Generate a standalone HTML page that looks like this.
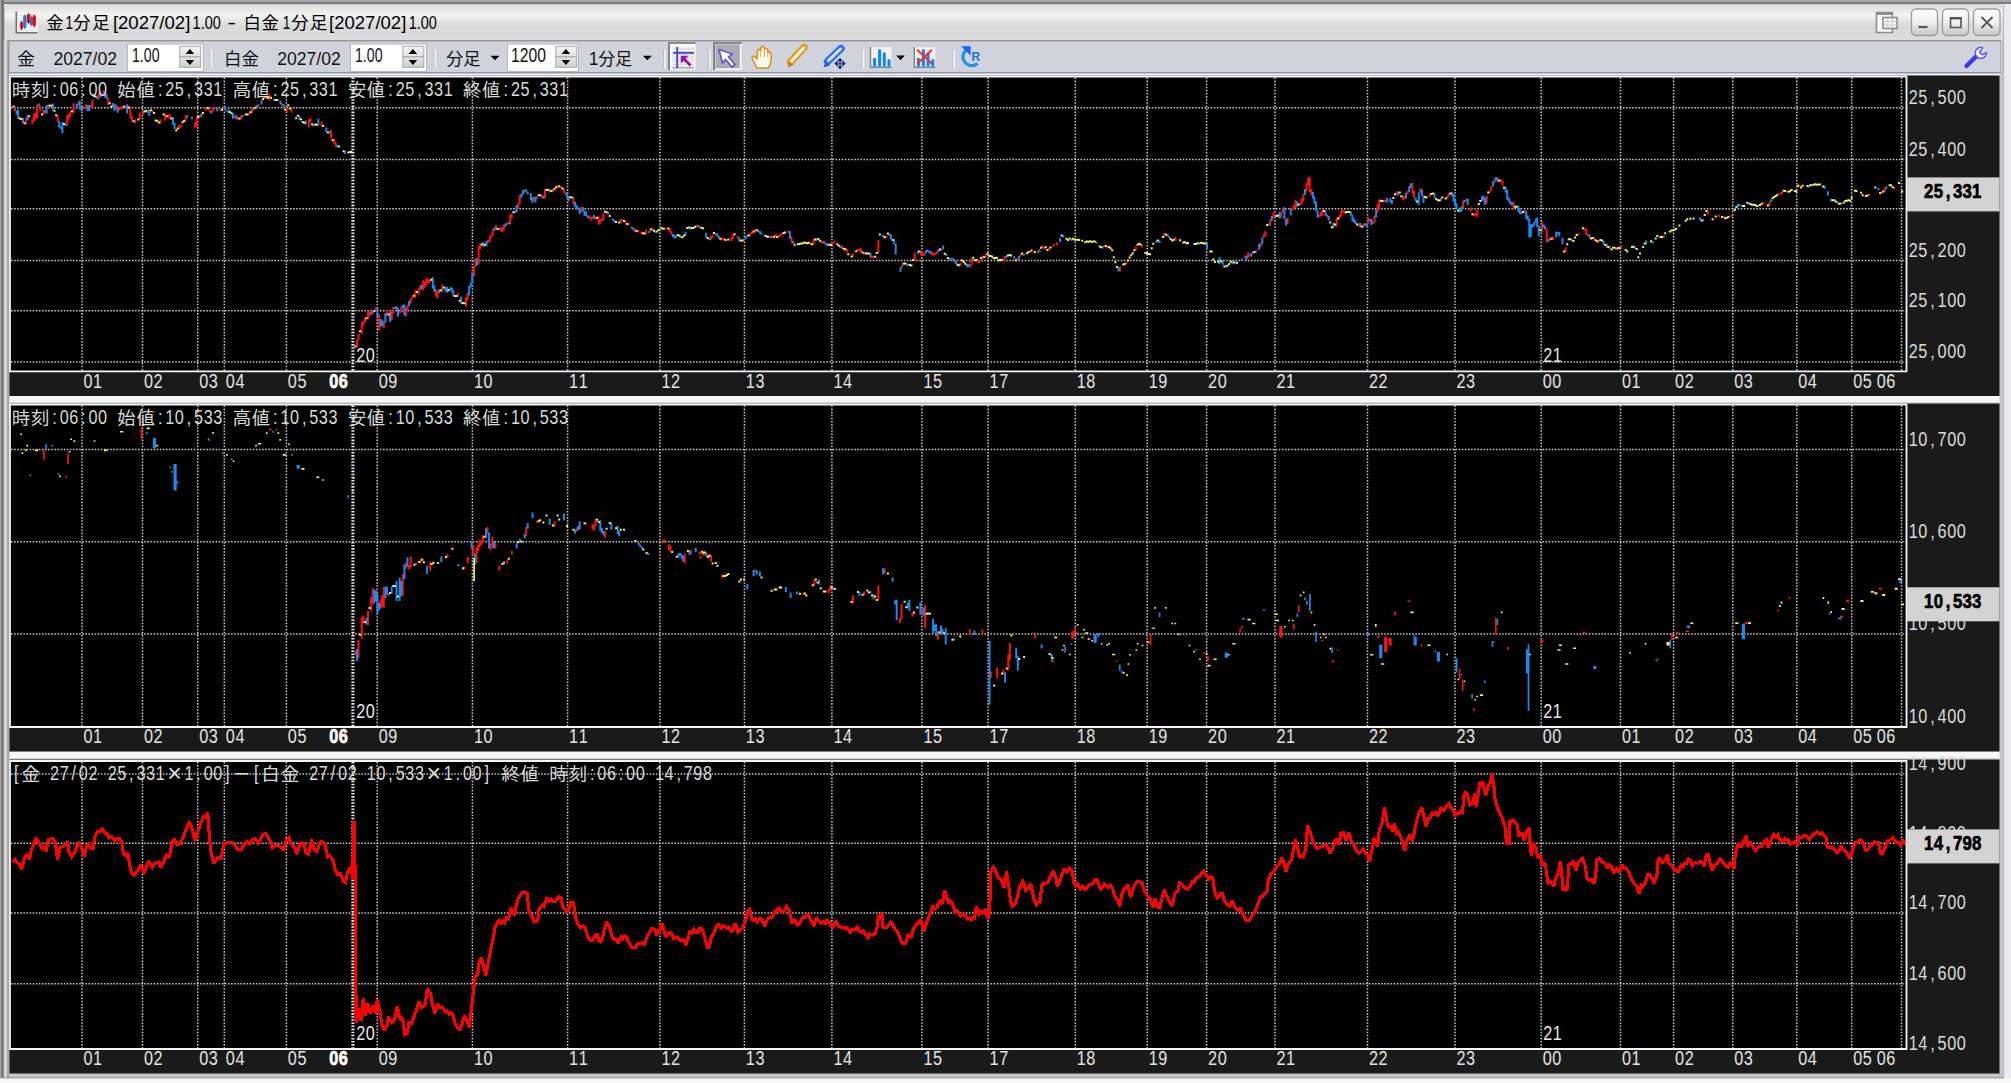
<!DOCTYPE html>
<html lang="ja">
<head>
<meta charset="utf-8">
<title>金1分足[2027/02]1.00 - 白金1分足[2027/02]1.00</title>
<style>
html,body{margin:0;padding:0;background:#f0f0f0;overflow:hidden}
svg{display:block}
text{white-space:pre}
</style>
</head>
<body>
<svg width="2011" height="1083" viewBox="0 0 2011 1083">
<defs>
<linearGradient id="gt" x1="0" y1="0" x2="0" y2="1">
<stop offset="0" stop-color="#dcdcdc"/><stop offset="0.28" stop-color="#f3f3f3"/><stop offset="0.6" stop-color="#d9d9d9"/><stop offset="1" stop-color="#dddddd"/>
</linearGradient>
<linearGradient id="gb" x1="0" y1="0" x2="0" y2="1">
<stop offset="0" stop-color="#ffffff"/><stop offset="0.5" stop-color="#f0f0f0"/><stop offset="1" stop-color="#c4c4c4"/>
</linearGradient>
<linearGradient id="gtop" x1="0" y1="0" x2="0" y2="1">
<stop offset="0" stop-color="#a6a8b0"/><stop offset="0.45" stop-color="#a0a2a8"/><stop offset="0.6" stop-color="#808080"/><stop offset="1" stop-color="#7c7c7c"/>
</linearGradient>
<linearGradient id="gsp" x1="0" y1="0" x2="0" y2="1">
<stop offset="0" stop-color="#f4f4f4"/><stop offset="1" stop-color="#d0d0d0"/>
</linearGradient>
</defs>
<!-- desktop / outer frame -->
<rect x="0" y="0" width="2011" height="1083" fill="#f4f4f8"/>
<rect x="0" y="0" width="2011" height="4" fill="url(#gtop)"/>
<rect x="0" y="0" width="4" height="1083" fill="#747474"/>
<rect x="0" y="0" width="1.2" height="1083" fill="#a8a8a8"/>
<!-- window body -->
<path d="M4 1078V9Q4 4 9 4H1998Q2004 4 2004 10V1078Z" fill="#c6c6c6"/>
<path d="M4.8 40.5V9.5Q4.8 4.8 9.5 4.8H1998Q2003.2 4.8 2003.2 10V40.5Z" fill="url(#gt)"/>
<rect x="3.7" y="40" width="3.4" height="1038" fill="#d4d4d4"/><rect x="7.1" y="40" width="2.4" height="1038" fill="#a6a6a6"/>
<rect x="2003.3" y="4" width="1" height="1074" fill="#b0b0b0"/>
<rect x="2004.3" y="4" width="6.7" height="1079" fill="#eaeaf2"/>
<rect x="0" y="1078" width="2011" height="5" fill="#f6f6f6"/>
<rect x="0" y="1077.2" width="2004" height="1.2" fill="#9a9a9a"/>
<!-- toolbar -->
<rect x="8" y="40" width="1993" height="34" fill="#989898"/>
<rect x="9.5" y="41.5" width="1991" height="31" fill="#d0d3db"/>
<rect x="9.5" y="72" width="1991" height="1.6" fill="#8a98b4"/>
<rect x="9.5" y="73.6" width="1991" height="2" fill="#f8f8f8"/>
<!-- gaps between panels -->
<rect x="9.5" y="396" width="1990" height="7.5" fill="#f7f7f7"/>
<rect x="9.5" y="751.5" width="1990" height="8" fill="#f7f7f7"/>
<rect x="9.5" y="402.2" width="1990" height="1.3" fill="#cfcfcf"/>
<rect x="9.5" y="758.2" width="1990" height="1.3" fill="#cfcfcf"/>
<!-- title icon -->
<g>
<rect x="16.5" y="12" width="21" height="21" fill="#f4f6f6"/>
<path d="M18 15.5H37M18 18.5H37M18 21.5H37M18 24.5H37M18 27.5H37M18 30.5H37" stroke="#dcdcdc" stroke-width="0.8"/>
<path d="M16.3 11.5V32.8H37.5" stroke="#707070" stroke-width="1.6" fill="none"/>
<path d="M21.6 20.5L23.1 23V28.1L21.6 30.6L20.1 28.1V23Z" fill="#ff0000"/><path d="M24.8 14.2L26.4 16.7V26.7L24.8 29.2L23.2 26.7V16.7Z" fill="#0a80e8"/><path d="M28.6 12.8L30.4 15.3V21.7L28.6 24.2L26.8 21.7V15.3Z" fill="#ff0000"/><path d="M31.4 15.8L32.9 18.3V23.9L31.4 26.4L29.9 23.9V18.3Z" fill="#0a80e8"/><path d="M34.2 14.2L35.9 16.7V25.1L34.2 27.6L32.5 25.1V16.7Z" fill="#ff0000"/>
</g>
<!-- title text -->
<text y="28.8" font-family="'Liberation Sans','Noto Sans CJK JP',sans-serif" font-size="18.4" fill="#000"><tspan x="46.3" textLength="17.2" lengthAdjust="spacing" font-size="17.4">金</tspan><tspan x="65.6" textLength="7.6" lengthAdjust="spacingAndGlyphs">1</tspan><tspan x="73.2" textLength="36.4" lengthAdjust="spacing" font-size="17.4">分足</tspan><tspan x="112.9" textLength="77.4" lengthAdjust="spacingAndGlyphs">[2027/02]</tspan><tspan x="192.6" textLength="28.2" lengthAdjust="spacingAndGlyphs">1.00</tspan> <tspan x="227.4" textLength="8.4" lengthAdjust="spacingAndGlyphs">-</tspan> <tspan x="243.4" textLength="35.6" lengthAdjust="spacing" font-size="17.4">白金</tspan><tspan x="282.7" textLength="7.6" lengthAdjust="spacingAndGlyphs">1</tspan><tspan x="291.3" textLength="36.2" lengthAdjust="spacing" font-size="17.4">分足</tspan><tspan x="329.1" textLength="77.2" lengthAdjust="spacingAndGlyphs">[2027/02]</tspan><tspan x="408.7" textLength="28.2" lengthAdjust="spacingAndGlyphs">1.00</tspan></text>
<!-- title buttons -->
<g>
<rect x="1876.5" y="12.5" width="16" height="20" fill="#fafafa" stroke="#8c8c8c" stroke-width="1.5"/>
<rect x="1876.5" y="12.5" width="16" height="2.4" fill="#8c8c8c"/>
<rect x="1883" y="17.5" width="14" height="11" fill="#f4f4f4" stroke="#8c8c8c" stroke-width="1.6"/>
<path d="M1883 21.5H1897M1883 25H1897M1887.7 19V28M1892.3 19V28" stroke="#c4c4c4" stroke-width="0.8"/>
<rect x="1911.5" y="9" width="26" height="26.5" rx="4.5" fill="url(#gb)" stroke="#9a9a9a" stroke-width="1.3"/>
<rect x="1942.5" y="9" width="26" height="26.5" rx="4.5" fill="url(#gb)" stroke="#9a9a9a" stroke-width="1.3"/>
<rect x="1973.5" y="9" width="26.5" height="26.5" rx="4.5" fill="url(#gb)" stroke="#9a9a9a" stroke-width="1.3"/>
<path d="M1918.5 27H1927.5" stroke="#555" stroke-width="2.2"/>
<rect x="1950.5" y="18" width="10.5" height="9.5" fill="none" stroke="#555" stroke-width="1.6"/>
<rect x="1950" y="17" width="11.5" height="2.4" fill="#555"/>
<path d="M1981.5 17L1992.5 28M1992.5 17L1981.5 28" stroke="#555" stroke-width="1.8"/>
</g>
<g font-family="'Liberation Sans','Noto Sans CJK JP',sans-serif" font-size="17.6" fill="#141414">
<!-- labels -->
<text x="17" y="65" textLength="18" lengthAdjust="spacingAndGlyphs">金</text>
<text x="53.5" y="65.3" font-size="18.4" textLength="63.5" lengthAdjust="spacingAndGlyphs">2027/02</text>
<text x="224" y="65" textLength="35" lengthAdjust="spacingAndGlyphs">白金</text>
<text x="277.2" y="65.3" font-size="18.4" textLength="63.5" lengthAdjust="spacingAndGlyphs">2027/02</text>
<text x="446" y="65" textLength="34.5" lengthAdjust="spacingAndGlyphs">分足</text>
<text x="589" y="65" textLength="43" lengthAdjust="spacingAndGlyphs">1分足</text>
<path d="M490.5 55.8H499.5L495 60.3Z M642.8 55.8H651.8L647.3 60.3Z M896.2 55.6H904.8L900.5 60.2Z" fill="#000"/>
<!-- spin boxes -->
<g>
<rect x="127.5" y="44" width="76" height="27.5" fill="#fff" stroke="#b4b8c2" stroke-width="1"/>
<rect x="350.5" y="44" width="76" height="27.5" fill="#fff" stroke="#b4b8c2" stroke-width="1"/>
<rect x="507.5" y="44" width="71" height="27.5" fill="#fff" stroke="#b4b8c2" stroke-width="1"/>
<text x="132" y="61.8" font-size="19.6" textLength="27.5" lengthAdjust="spacingAndGlyphs">1.00</text>
<text x="355" y="61.8" font-size="19.6" textLength="27.5" lengthAdjust="spacingAndGlyphs">1.00</text>
<text x="511" y="61.8" font-size="19.6" textLength="35" lengthAdjust="spacingAndGlyphs">1200</text>
</g>
<g id="spin">
<rect x="179.8" y="46.3" width="21" height="21" fill="url(#gsp)" stroke="#a8a8a8" stroke-width="1"/>
<path d="M179.8 56.8H200.8" stroke="#a8a8a8" stroke-width="1.2"/>
<path d="M185.6 54H194.2L189.9 49Z M185.6 60H194.2L189.9 65Z" fill="#000"/>
</g>
<use href="#spin" x="223"/>
<use href="#spin" x="376"/>
<!-- separators -->
<g id="sep"><rect x="209.6" y="49.6" width="1" height="19.2" fill="#b8bcc4"/><rect x="210.6" y="49.6" width="1.6" height="19.2" fill="#f4f4f6"/></g>
<use href="#sep" x="224"/>
<use href="#sep" x="453.5"/>
<use href="#sep" x="498.4"/>
<use href="#sep" x="652"/>
<use href="#sep" x="742.6"/>
<!-- icon 1: crosshair page (pressed) -->
<g>
<rect x="669" y="43" width="26.5" height="27" fill="#fafafa"/>
<path d="M669 70V43H695.5" stroke="#6e6e6e" stroke-width="1.6" fill="none"/>
<rect x="672.5" y="46.5" width="21.5" height="21.5" fill="#f2f2ec"/>
<path d="M672.5 49H694M672.5 51.5H694M672.5 54.5H694M672.5 57H694M672.5 59.5H694M672.5 62H694M672.5 64.5H694M672.5 67H694" stroke="#cfcfcf" stroke-width="0.8"/>
<path d="M672.5 68H694" stroke="#888" stroke-width="1"/>
<path d="M677.2 47V68M673 52.9H694" stroke="#4a42c4" stroke-width="1.8"/>
<path d="M690.5 65.5L683 58" stroke="#9a10b4" stroke-width="2.6"/>
<path d="M680.8 55.8H688.5L680.8 63.5Z" fill="#9a10b4"/>
</g>
<!-- icon 2: pointer (pressed) -->
<g>
<rect x="714.2" y="43" width="27.3" height="27" fill="#fafafa"/>
<path d="M714.2 70V43H741.5" stroke="#6e6e6e" stroke-width="1.6" fill="none"/>
<rect x="715.5" y="44.3" width="24.3" height="24" fill="#a9adb1"/>
<path d="M719 49.5L732.5 54L728.5 57L735 64.5L732 67L725.5 59.5L722.5 63Z" fill="#fff" stroke="#6a52d4" stroke-width="1.7" stroke-linejoin="round"/>
</g>
<!-- hand -->
<g>
<path d="M757 68C755 63 752 60 752 57.5C752.5 55.5 755 56 757 59L757.5 51C757.8 48.8 760.3 48.8 760.5 51L761 48C761.4 45.8 764 45.8 764.2 48L764.6 49.5C765 47.6 767.6 47.8 767.7 50L768.2 53C768.8 51.4 771 51.8 771 54C771.6 59 771 63.5 768.5 68Z" fill="#fffaf0" stroke="#e0901a" stroke-width="1.6" stroke-linejoin="round"/>
<path d="M760.7 51V57M764.4 49.5V57M767.8 52V57.5" stroke="#e8a848" stroke-width="1"/>
</g>
<!-- pencil -->
<g>
<path d="M790.5 62L804 47.5" stroke="#e89a20" stroke-width="7.4" stroke-linecap="round"/>
<path d="M791.2 61.4L803.6 48" stroke="#fff6e4" stroke-width="3" stroke-linecap="round"/>
<path d="M787.8 67.2L789 61L793.5 65Z" fill="#c07818"/>
</g>
<!-- marker -->
<g>
<path d="M827.5 61.5L841 48.5" stroke="#2f74e4" stroke-width="7.4" stroke-linecap="round"/>
<path d="M828.5 60.5L840.5 49" stroke="#dce8ff" stroke-width="2.8" stroke-linecap="round"/>
<path d="M823.5 67.5L825.5 61.5L830 65.5Z" fill="#2a60c8"/>
<path d="M840 58L845.6 63.6L840 69.2L834.4 63.6Z" fill="#0e2468"/>
<path d="M838.5 60.5V66.8M841.6 60.5V66.8M836.8 62.2H843.2M836.8 65.2H843.2" stroke="#c8d4f4" stroke-width="0.7"/>
</g>
<!-- bar chart -->
<g id="bars">
<rect x="870.5" y="47.3" width="21" height="20" fill="#f8f8f8"/>
<path d="M871 50H891.5M871 53H891.5M871 56H891.5M871 59H891.5M871 62H891.5M871 65H891.5" stroke="#e2dcd4" stroke-width="0.8"/>
<path d="M870.5 47V67.3H891.6" stroke="#808080" stroke-width="1.4" fill="none"/>
<path d="M874.6 58V66.6M879.6 49.5V66.6M884.3 52.4V66.6M889 59.2V66.6" stroke="#0a84ff" stroke-width="3"/>
</g>
<use href="#bars" x="43.8"/>
<path d="M917.8 50.2L931.4 63.2M931.4 50.2L917.8 63.2" stroke="#ff2a2a" stroke-width="2" stroke-linecap="round"/>
<!-- refresh -->
<g>
<path d="M966 50A8.6 8.6 0 1 0 977.5 63.5" stroke="#2294e4" stroke-width="3.2" fill="none"/>
<path d="M961 46.2H970.6V55.5Z" fill="#1464ff"/>
<text x="971.6" y="61.4" font-size="12.6" font-weight="bold" fill="#1274d8" textLength="8.6" lengthAdjust="spacingAndGlyphs">R</text>
</g>
<!-- wrench -->
<g>
<path d="M1966.5 66L1977 55.5" stroke="#3a3af0" stroke-width="4.4" stroke-linecap="round"/>
<path d="M1982.6 47.6A5.6 5.6 0 1 0 1986.4 52.6L1982.2 54.8L1979.6 52.4Z" fill="#f0f0ff" stroke="#5a5af0" stroke-width="1.5" stroke-linejoin="round"/>
</g>
</g>

<g font-family="'Liberation Sans','IPAGothic',sans-serif"><rect x="9.5" y="75.5" width="1990.0" height="320.5" fill="#1a1a1a"/>
<rect x="10.0" y="76.5" width="1896.5" height="294.9" fill="#000"/>
<g stroke="#c8c8c8" stroke-width="1.5" stroke-dasharray="1.55 1.55" fill="none"><path d="M82.0 77.5V371.4"/><path d="M142.5 77.5V371.4"/><path d="M197.7 77.5V371.4"/><path d="M224.3 77.5V371.4"/><path d="M286.4 77.5V371.4"/><path d="M352.9 77.5V371.4" stroke="#ececec" stroke-width="3.1"/><path d="M377.2 77.5V371.4"/><path d="M472.4 77.5V371.4"/><path d="M567.6 77.5V371.4"/><path d="M659.9 77.5V371.4"/><path d="M744.4 77.5V371.4"/><path d="M831.9 77.5V371.4"/><path d="M921.9 77.5V371.4"/><path d="M988.1 77.5V371.4"/><path d="M1075.3 77.5V371.4"/><path d="M1147.2 77.5V371.4"/><path d="M1206.6 77.5V371.4"/><path d="M1275.0 77.5V371.4"/><path d="M1367.5 77.5V371.4"/><path d="M1455.0 77.5V371.4"/><path d="M1541.2 77.5V371.4"/><path d="M1620.5 77.5V371.4"/><path d="M1673.6 77.5V371.4"/><path d="M1732.8 77.5V371.4"/><path d="M1796.8 77.5V371.4"/><path d="M1851.7 77.5V371.4"/><path d="M1901.5 77.5V371.4"/><path d="M11.0 107.7H1905.5"/><path d="M11.0 159.5H1905.5"/><path d="M11.0 208.7H1905.5"/><path d="M11.0 260.5H1905.5"/><path d="M11.0 310.7H1905.5"/><path d="M11.0 362.0H1905.5"/></g>
<path d="M15.0 105.9V111.1M26.1 117.5V124.5M32.4 119.4V124.3M34.0 113.6V121.6M35.5 112.9V119.5M37.1 104.8V118.3M40.3 105.7V110.9M43.4 109.8V114.9M48.2 104.6V109.0M57.7 115.1V121.7M67.1 115.6V125.8M68.7 114.0V119.6M70.3 111.3V117.3M73.5 103.3V113.1M78.2 102.0V105.8M84.5 106.8V109.2M86.1 104.2V109.3M90.8 104.4V107.6M92.4 99.5V108.1M98.7 93.0V99.5M103.5 90.6V94.0M108.2 97.8V105.0M116.1 104.2V109.8M119.3 108.1V110.5M120.9 106.6V109.5M122.4 106.3V108.7M125.6 105.4V107.8M130.3 106.6V117.9M131.9 116.3V121.0M135.1 119.4V123.0M139.8 112.7V119.5M143.0 110.6V114.5M152.5 110.0V112.8M160.4 119.4V124.0M165.1 113.4V120.7M168.3 114.2V118.2M169.8 113.9V119.2M179.3 124.7V129.3M180.9 124.6V127.0M185.6 114.9V121.5M195.1 122.3V127.4M196.7 116.4V127.2M199.9 115.0V117.6M206.2 107.5V110.7M209.3 107.3V111.4M212.5 108.0V112.6M214.1 106.8V109.8M220.4 108.5V110.9M226.7 109.7V112.1M234.6 115.6V118.0M237.8 116.5V119.8M240.9 115.6V119.5M248.8 112.8V115.2M252.0 107.6V113.0M258.3 104.0V106.8M264.6 96.1V99.3M269.4 93.5V100.5M282.0 102.9V105.7M286.8 108.5V112.4M291.5 107.8V112.6M308.9 119.5V126.9M310.5 118.3V121.9M321.5 121.8V125.9M331.0 129.9V137.9M334.2 138.3V144.0M335.7 142.3V147.1M357.0 339.5V347.3M358.5 333.8V340.5M361.7 322.2V333.9M363.3 321.0V325.6M364.9 318.0V323.1M368.0 310.5V319.3M369.6 311.0V316.5M372.8 311.3V314.5M375.9 307.4V311.6M379.1 313.9V330.7M383.8 320.5V328.1M387.0 310.4V316.0M391.7 310.8V320.3M393.3 306.8V313.7M399.6 311.1V313.5M401.2 306.5V312.4M405.9 307.5V316.5M407.5 304.9V311.6M410.7 298.6V303.8M412.3 296.7V299.6M415.4 290.2V297.9M418.6 288.2V294.6M420.2 285.5V290.2M423.3 280.2V290.6M424.9 281.5V287.8M426.5 278.2V285.5M428.1 278.4V282.8M429.6 279.9V282.9M436.0 289.2V296.4M437.5 291.0V298.5M442.3 284.5V292.5M458.1 293.1V296.7M466.0 297.5V306.5M467.6 292.6V300.5M473.9 266.1V276.5M475.5 258.2V267.1M478.6 246.1V264.6M480.2 243.2V249.1M488.1 239.8V243.1M489.7 236.5V242.1M491.3 234.2V237.9M492.8 228.9V235.5M496.0 225.1V229.7M500.7 227.9V231.5M502.3 226.6V231.9M503.9 224.5V230.1M507.1 222.7V225.1M510.2 214.6V224.2M511.8 213.9V218.1M518.1 202.4V209.0M519.7 194.7V204.0M524.4 189.7V193.1M533.9 196.8V201.4M537.1 196.4V198.9M541.8 195.2V197.9M545.0 189.1V198.2M552.9 188.3V192.3M557.6 184.8V188.5M560.8 186.0V188.4M563.9 188.0V193.1M565.5 192.6V195.0M573.4 196.8V204.5M581.3 206.4V212.5M589.2 216.0V218.4M590.8 216.8V220.8M592.4 216.4V218.8M595.5 216.7V219.8M598.7 216.6V224.7M600.3 219.4V223.2M601.9 218.5V220.9M603.4 213.3V220.4M620.8 219.0V222.8M622.4 218.9V221.3M625.6 220.9V223.3M628.7 222.7V225.5M635.0 228.7V232.0M638.2 229.7V232.5M641.4 231.8V234.2M646.1 229.4V234.1M652.4 227.9V231.3M665.1 227.6V230.0M669.8 227.7V232.1M671.4 231.3V235.2M696.7 224.8V227.3M699.8 225.9V228.3M710.9 236.1V240.1M712.5 235.3V237.7M715.6 233.1V235.5M721.9 237.9V240.6M723.5 237.6V240.0M726.7 238.9V241.3M731.4 237.2V241.0M733.0 233.9V239.0M737.7 236.1V238.5M744.1 238.8V241.2M750.4 232.6V235.5M752.0 231.7V234.1M755.1 229.1V232.7M769.3 235.2V237.6M772.5 235.8V238.3M775.7 234.1V237.2M778.8 235.0V237.4M780.4 233.7V236.4M782.0 232.7V235.1M788.3 230.4V233.1M791.5 236.3V243.1M810.4 242.3V245.0M813.6 238.4V244.7M821.5 240.6V243.2M824.6 240.8V244.2M832.5 242.1V245.2M834.1 240.8V243.2M842.0 245.6V248.8M846.8 248.8V252.8M853.1 253.8V256.9M857.8 248.9V251.3M859.4 248.7V251.1M861.0 248.2V252.5M864.1 252.4V254.8M872.0 256.0V258.4M873.6 255.8V258.2M878.4 240.0V253.3M886.3 235.6V238.4M902.1 265.0V267.7M914.7 252.5V261.2M921.0 250.8V254.9M922.6 252.5V256.2M924.2 252.4V256.1M932.1 252.3V255.6M933.7 252.7V255.6M935.2 252.6V255.0M936.8 251.5V254.3M941.6 248.4V250.8M951.0 257.8V260.2M960.5 263.1V266.1M970.0 264.2V267.3M971.6 258.2V265.6M977.9 259.8V262.7M979.5 260.6V263.0M982.6 255.5V259.0M985.8 253.9V257.1M1003.2 258.2V261.4M1004.8 256.0V259.6M1017.4 258.3V260.7M1020.6 253.7V256.5M1030.0 250.6V253.0M1037.9 250.8V253.2M1042.7 245.4V247.8M1044.3 246.0V249.5M1049.0 247.6V250.2M1053.7 244.0V246.4M1056.9 241.9V245.5M1104.3 244.9V247.3M1107.5 246.0V248.4M1120.1 266.6V271.4M1126.4 261.7V264.1M1135.9 246.7V250.6M1142.2 244.4V247.6M1164.3 233.0V237.7M1175.4 237.0V240.5M1244.9 255.6V258.6M1248.1 252.2V258.1M1249.7 254.0V256.4M1256.0 250.4V252.8M1260.7 242.3V247.0M1263.9 233.6V237.7M1265.5 231.2V236.5M1270.2 219.3V225.6M1273.4 211.9V218.3M1274.9 214.1V216.5M1281.3 212.2V217.9M1282.8 207.8V212.9M1287.6 217.6V224.1M1292.3 207.5V210.6M1293.9 205.1V209.5M1295.5 199.8V208.2M1300.2 202.7V205.4M1301.8 198.1V203.9M1303.4 193.6V201.1M1306.5 182.7V191.0M1308.1 177.9V185.5M1309.7 176.6V192.1M1311.3 188.7V195.5M1319.2 214.6V217.0M1320.8 212.3V216.6M1322.3 210.1V216.1M1327.1 213.9V217.6M1336.6 218.3V226.8M1339.7 214.8V218.8M1341.3 210.3V216.2M1342.9 210.0V212.4M1344.5 210.4V213.8M1358.7 223.3V225.9M1363.4 223.8V228.1M1368.2 217.1V223.9M1372.9 221.3V223.9M1374.5 215.4V222.4M1377.6 204.3V212.5M1379.2 199.4V208.6M1384.0 199.5V201.9M1385.5 199.8V202.3M1396.6 191.5V195.5M1402.9 196.3V199.7M1404.5 195.6V199.6M1407.7 190.4V194.0M1412.4 183.0V193.5M1414.0 190.8V197.7M1420.3 188.2V192.9M1429.8 193.5V197.3M1447.2 195.8V199.3M1448.7 192.9V196.7M1463.0 201.1V208.4M1466.1 199.1V201.6M1470.9 207.7V211.4M1474.0 213.3V216.3M1475.6 213.1V216.0M1477.2 209.7V216.9M1486.7 195.8V203.5M1489.8 190.4V193.1M1491.4 186.2V190.7M1494.6 177.8V182.7M1500.9 178.7V182.3M1502.5 180.8V185.7M1513.5 201.5V209.0M1524.6 209.8V212.5M1542.0 222.0V232.3M1546.7 228.9V242.5M1549.9 237.2V240.2M1553.0 236.7V240.0M1565.7 247.3V252.5M1578.3 232.7V235.2M1584.6 227.9V230.3M1586.2 228.4V234.7M1587.8 233.5V236.0M1594.1 236.9V240.4M1598.8 240.0V242.4M1609.9 246.1V249.1M1621.0 245.1V248.7M1663.6 235.3V237.7M1707.9 210.6V214.6M1718.9 214.7V217.1M1723.7 216.2V218.6M1731.6 214.8V217.2M1763.2 202.2V204.6M1769.5 201.6V205.9M1780.5 192.6V195.0M1782.1 191.4V193.8M1799.5 184.4V186.8M1869.0 193.7V196.1M1881.7 191.5V193.9M1884.8 187.5V191.8M1894.3 187.1V189.5" stroke="#ff1010" stroke-width="2" fill="none"/>
<path d="M16.6 110.8V114.4M18.2 109.8V118.9M22.9 118.1V122.9M27.6 114.8V120.1M38.7 103.5V106.4M45.0 110.2V112.8M46.6 105.1V113.7M52.9 103.6V110.5M59.2 120.8V127.6M60.8 126.3V129.1M62.4 121.9V133.2M65.6 123.6V126.0M76.6 103.9V108.5M79.8 100.6V109.6M81.4 107.0V111.1M87.7 105.1V111.2M89.3 105.0V111.0M97.2 96.5V99.1M100.3 91.8V97.1M105.1 92.8V97.5M106.6 94.1V98.8M113.0 102.9V106.9M114.5 104.3V111.0M117.7 106.2V112.7M127.2 104.2V113.4M147.7 110.6V113.0M149.3 109.4V115.9M173.0 117.2V124.7M174.6 122.8V129.1M187.2 115.3V117.7M192.0 116.4V119.2M201.4 113.5V117.1M210.9 111.0V113.6M217.2 107.2V111.3M225.1 106.4V110.2M228.3 109.4V113.2M233.0 113.0V118.7M236.2 114.9V119.2M242.5 114.8V117.2M253.6 108.2V110.6M256.7 105.1V108.0M261.5 100.1V104.6M274.1 98.5V100.9M280.4 100.8V104.2M283.6 104.1V108.3M299.4 115.4V120.3M305.7 120.5V124.8M313.6 123.9V126.3M318.4 118.7V125.4M326.3 127.6V132.0M329.4 131.0V133.4M337.3 144.7V147.2M345.2 150.7V154.0M371.2 312.0V314.4M377.5 308.5V316.3M380.7 318.9V326.8M382.2 320.6V326.2M385.4 313.1V322.8M390.1 311.9V322.0M394.9 306.7V309.1M396.5 306.2V309.4M398.0 307.7V316.5M402.8 304.7V308.2M404.4 304.5V315.4M409.1 300.8V306.5M421.7 284.6V289.5M432.8 277.2V288.4M434.4 285.4V292.1M439.1 289.5V293.2M445.4 287.1V291.6M447.0 286.7V292.8M450.2 287.2V290.4M451.8 287.4V291.9M453.3 290.6V296.4M461.2 296.4V304.1M469.1 285.9V295.4M470.7 282.4V287.6M472.3 272.4V283.8M477.0 258.8V265.6M483.4 242.0V246.9M486.5 240.7V246.1M494.4 227.2V230.7M499.2 227.4V229.8M505.5 223.5V226.7M508.6 221.9V224.3M515.0 210.5V212.9M516.5 205.3V212.4M521.3 194.0V197.8M522.9 189.8V195.2M526.0 189.3V191.8M527.6 191.5V194.6M530.8 193.1V199.9M532.3 197.3V202.8M535.5 196.7V202.6M543.4 195.4V198.7M549.7 189.0V192.6M567.1 192.0V197.9M568.7 196.3V200.9M575.0 201.7V207.1M576.6 205.1V209.4M578.2 207.3V209.7M579.7 208.9V214.1M582.9 207.2V211.5M584.5 210.4V216.0M586.1 211.5V216.0M587.6 215.3V218.3M594.0 214.9V218.9M608.2 211.7V214.6M612.9 218.4V220.8M614.5 220.1V222.7M631.9 226.6V229.0M633.5 228.0V230.4M649.3 230.7V233.1M655.6 230.6V233.0M660.3 227.3V231.2M673.0 233.9V236.9M674.5 234.8V238.6M676.1 235.4V238.0M680.9 235.5V237.9M685.6 231.7V236.1M690.3 226.4V229.8M698.2 225.1V227.5M706.1 232.7V237.8M709.3 237.7V240.3M717.2 233.3V236.5M718.8 235.6V238.7M739.3 237.2V241.7M745.6 236.2V239.4M747.2 234.7V237.3M758.3 229.7V232.1M759.9 230.7V233.7M761.4 232.4V234.8M764.6 234.5V236.9M770.9 235.9V238.3M789.9 231.2V238.7M793.0 240.9V243.4M816.7 238.3V240.7M823.1 241.2V243.6M826.2 243.1V245.5M827.8 243.1V246.2M840.4 245.6V248.0M870.5 252.9V257.6M883.1 234.5V237.6M889.4 233.5V235.9M891.0 234.4V238.9M894.2 239.2V244.3M895.7 243.8V254.4M900.5 267.2V271.9M906.8 263.2V265.6M908.4 263.9V266.3M917.9 250.7V254.0M925.8 250.5V253.5M927.3 249.6V252.0M928.9 250.4V252.8M930.5 250.8V254.2M938.4 249.2V252.3M943.1 245.4V249.2M946.3 253.5V256.0M949.5 257.8V260.2M952.6 258.0V260.4M954.2 259.1V262.2M955.8 260.8V264.0M966.8 263.7V267.3M968.4 264.1V267.0M1006.3 255.4V257.8M1014.2 256.3V258.7M1019.0 256.0V259.4M1023.7 253.4V255.8M1039.5 249.6V252.0M1060.1 237.7V241.9M1063.2 235.1V237.5M1071.1 238.4V240.8M1096.4 241.4V243.8M1102.7 246.0V248.4M1118.5 267.1V271.4M1156.4 240.2V242.8M1159.6 240.5V242.9M1167.5 233.9V236.7M1169.1 235.9V238.3M1199.1 242.4V244.8M1207.0 243.2V249.5M1219.6 257.0V264.0M1222.8 259.8V264.8M1226.0 264.8V267.5M1232.3 260.5V264.3M1235.4 261.9V264.3M1241.8 258.4V261.1M1246.5 255.5V260.6M1251.2 253.1V256.7M1252.8 251.2V253.6M1259.1 244.1V249.7M1262.3 237.3V244.0M1268.6 223.5V225.9M1271.8 216.0V221.0M1279.7 211.4V218.5M1284.4 207.3V219.1M1286.0 219.0V225.7M1290.7 208.4V215.5M1297.1 201.3V206.8M1305.0 189.1V195.1M1312.9 191.8V198.6M1314.4 196.6V203.5M1316.0 201.5V211.6M1317.6 210.7V217.8M1325.5 210.5V216.1M1328.7 215.8V220.6M1333.4 222.6V228.2M1350.8 211.2V215.7M1352.4 214.7V221.2M1353.9 218.6V222.6M1355.5 220.5V223.9M1360.3 223.0V227.3M1365.0 223.2V225.8M1366.6 223.5V226.6M1369.7 218.9V221.3M1371.3 218.9V225.1M1376.1 209.6V217.5M1387.1 197.8V202.6M1390.3 198.2V202.2M1391.9 200.1V204.0M1398.2 191.5V195.4M1406.1 192.8V198.5M1409.2 186.2V192.0M1410.8 183.2V187.9M1415.6 197.4V201.2M1418.7 192.6V205.0M1421.9 189.2V195.9M1423.5 195.5V203.0M1434.5 192.7V197.7M1440.8 197.7V201.0M1451.9 192.1V196.2M1453.5 194.0V201.8M1455.1 199.0V205.9M1456.6 203.4V209.6M1459.8 208.9V212.2M1461.4 206.6V211.6M1464.5 200.1V202.5M1467.7 198.6V205.0M1481.9 196.2V201.1M1483.5 195.8V200.5M1485.1 197.7V204.9M1493.0 181.0V186.6M1496.1 177.1V180.8M1497.7 177.8V181.4M1505.6 186.4V192.6M1507.2 190.0V199.8M1508.8 197.4V202.1M1510.4 200.9V204.6M1511.9 202.2V205.6M1518.3 205.4V211.9M1519.8 208.1V213.9M1521.4 211.8V214.2M1526.2 210.7V218.9M1527.7 215.5V220.6M1529.3 218.4V237.3M1530.9 224.1V237.2M1532.5 224.6V227.7M1534.1 222.2V226.1M1535.6 218.7V222.9M1537.2 217.6V227.1M1538.8 225.7V236.2M1543.5 224.4V227.5M1545.1 225.8V229.4M1548.3 239.0V241.7M1556.2 231.5V237.6M1557.8 231.9V234.3M1559.3 231.9V236.3M1562.5 237.8V244.3M1572.0 239.2V241.6M1589.4 234.5V237.7M1603.6 240.4V244.7M1606.7 243.7V248.0M1616.2 247.6V250.0M1635.2 246.5V248.9M1646.2 240.5V244.3M1652.6 241.0V243.4M1700.0 217.6V220.0M1703.1 219.0V221.4M1737.9 204.0V207.0M1739.5 203.7V206.1M1748.9 202.3V204.7M1758.4 204.7V207.1M1771.1 199.5V202.0M1809.0 185.0V187.4M1812.1 184.1V186.5M1824.8 185.7V188.7M1827.9 191.2V195.5M1831.1 198.7V201.4M1837.4 201.1V203.6M1878.5 187.9V190.3M1886.4 186.5V188.9" stroke="#1e88f0" stroke-width="2" fill="none"/>
<path d="M13.4 105.4V107.4M19.7 117.5V119.5M21.3 118.1V120.1M24.5 122.2V124.2M29.2 115.2V117.2M41.9 113.6V115.6M49.8 104.5V106.5M51.3 104.7V106.7M54.5 109.8V111.8M56.1 114.3V116.3M64.0 123.0V125.0M71.9 110.2V112.2M94.0 95.1V97.1M95.6 95.6V97.6M109.8 102.3V104.3M111.4 105.4V107.4M124.0 105.8V107.8M128.8 106.4V108.4M133.5 120.2V122.2M138.2 118.4V120.4M144.6 110.5V112.5M146.1 109.8V111.8M150.9 109.2V111.2M154.0 111.9V113.9M155.6 119.6V121.6M157.2 119.8V121.8M158.8 121.6V123.6M163.5 113.6V115.6M166.7 115.3V117.3M171.4 117.4V119.4M176.2 129.4V131.4M177.7 127.4V129.4M182.5 121.2V123.2M184.1 120.1V122.1M198.3 116.0V118.0M203.0 112.1V114.1M207.8 107.1V109.1M222.0 108.7V110.7M229.9 110.9V112.9M231.5 112.2V114.2M239.4 117.4V119.4M245.7 113.5V115.5M247.3 113.4V115.4M250.4 111.2V113.2M255.2 106.8V108.8M263.1 98.1V100.1M266.2 95.7V97.7M267.8 97.0V99.0M271.0 96.8V98.8M275.7 98.9V100.9M277.3 99.1V101.1M285.2 108.7V110.7M288.3 104.3V106.3M289.9 107.6V109.6M296.2 117.2V119.2M297.8 114.7V116.7M301.0 118.2V120.2M302.6 121.0V123.0M304.1 121.8V123.8M312.0 123.2V125.2M315.2 123.6V125.6M316.8 123.8V125.8M323.1 124.9V126.9M327.8 131.6V133.6M332.6 139.2V141.2M338.9 145.4V147.4M343.6 150.2V152.2M348.4 151.4V153.4M350.0 151.1V153.1M351.5 151.0V153.0M355.4 345.4V347.4M360.1 330.3V332.3M366.4 317.3V319.3M374.3 310.0V312.0M388.6 313.5V315.5M413.8 294.8V296.8M417.0 291.0V293.0M431.2 278.8V280.8M440.7 289.2V291.2M443.9 286.5V288.5M448.6 289.2V291.2M454.9 295.1V297.1M456.5 295.0V297.0M459.7 299.7V301.7M462.8 302.0V304.0M464.4 302.3V304.3M481.8 243.5V245.5M484.9 243.8V245.8M497.6 228.1V230.1M513.4 211.2V213.2M538.7 194.2V196.2M540.2 194.3V196.3M546.6 189.0V191.0M548.1 188.7V190.7M551.3 190.0V192.0M554.5 188.3V190.3M556.0 186.2V188.2M559.2 185.2V187.2M562.4 187.6V189.6M570.3 196.2V198.2M571.8 196.4V198.4M597.1 216.8V218.8M605.0 210.7V212.7M606.6 211.3V213.3M609.8 215.0V217.0M616.1 221.1V223.1M619.2 221.4V223.4M624.0 219.9V221.9M627.1 223.1V225.1M636.6 230.1V232.1M642.9 232.3V234.3M644.5 232.6V234.6M650.8 228.4V230.4M654.0 229.7V231.7M657.2 230.5V232.5M658.7 229.1V231.1M661.9 227.2V229.2M663.5 227.7V229.7M668.2 227.4V229.4M677.7 234.1V236.1M679.3 234.7V236.7M682.4 236.2V238.2M684.0 234.5V236.5M687.2 227.1V229.1M688.8 226.6V228.6M691.9 227.1V229.1M693.5 227.1V229.1M695.1 225.7V227.7M701.4 226.7V228.7M703.0 227.2V229.2M707.7 237.1V239.1M714.0 232.1V234.1M720.4 237.8V239.8M725.1 238.7V240.7M728.3 238.6V240.6M734.6 233.3V235.3M740.9 239.6V241.6M742.5 239.5V241.5M748.8 234.5V236.5M753.5 230.6V232.6M756.7 229.3V231.3M766.2 234.9V236.9M767.8 236.1V238.1M774.1 235.8V237.8M777.2 235.9V237.9M783.6 232.0V234.0M785.1 231.5V233.5M794.6 243.7V245.7M797.8 243.3V245.3M799.4 243.0V245.0M800.9 242.5V244.5M802.5 242.4V244.4M804.1 241.6V243.6M805.7 242.0V244.0M807.3 242.3V244.3M808.8 241.7V243.7M812.0 243.2V245.2M815.2 238.6V240.6M818.3 238.1V240.1M819.9 239.7V241.7M829.4 243.8V245.8M831.0 244.0V246.0M837.3 243.3V245.3M838.9 244.7V246.7M843.6 247.7V249.7M845.2 248.2V250.2M848.3 253.3V255.3M851.5 255.6V257.6M856.2 250.3V252.3M862.6 251.5V253.5M865.7 252.3V254.3M867.3 252.4V254.4M868.9 252.5V254.5M875.2 255.8V257.8M876.8 252.0V254.0M879.9 233.5V235.5M884.7 236.1V238.1M887.8 232.6V234.6M892.6 238.9V240.9M903.6 262.7V264.7M905.2 262.5V264.5M910.0 264.1V266.1M911.5 264.5V266.5M913.1 258.9V260.9M919.4 250.6V252.6M940.0 248.4V250.4M944.7 252.8V254.8M947.9 257.1V259.1M957.4 263.8V265.8M958.9 264.2V266.2M962.1 259.5V261.5M963.7 261.0V263.0M965.3 262.7V264.7M973.2 256.7V258.7M974.7 259.2V261.2M976.3 258.9V260.9M981.1 257.1V259.1M984.2 256.0V258.0M987.4 252.7V254.7M989.0 254.8V256.8M990.5 255.0V257.0M992.1 255.6V257.6M993.7 257.1V259.1M995.3 257.0V259.0M996.9 256.7V258.7M998.4 259.3V261.3M1000.0 259.3V261.3M1001.6 259.1V261.1M1007.9 254.5V256.5M1009.5 254.1V256.1M1011.1 254.6V256.6M1015.8 259.2V261.2M1022.1 252.5V254.5M1026.9 252.2V254.2M1028.5 250.9V252.9M1031.6 249.5V251.5M1034.8 250.9V252.9M1041.1 246.7V248.7M1045.8 246.2V248.2M1047.4 249.1V251.1M1050.6 246.5V248.5M1061.6 234.4V236.4M1066.4 237.7V239.7M1068.0 239.0V241.0M1069.5 237.5V239.5M1072.7 237.7V239.7M1074.3 238.5V240.5M1075.9 238.8V240.8M1077.4 238.8V240.8M1079.0 239.1V241.1M1082.2 239.7V241.7M1085.3 241.2V243.2M1086.9 240.4V242.4M1088.5 240.7V242.7M1090.1 240.3V242.3M1091.7 240.7V242.7M1093.2 240.6V242.6M1094.8 240.5V242.5M1099.6 245.4V247.4M1101.1 246.3V248.3M1105.9 245.1V247.1M1109.0 245.9V247.9M1110.6 247.2V249.2M1112.2 249.3V251.3M1113.8 256.3V258.3M1115.4 261.2V263.2M1116.9 266.1V268.1M1123.3 263.5V265.5M1124.8 262.9V264.9M1128.0 259.5V261.5M1129.6 256.4V258.4M1131.2 254.3V256.3M1132.7 252.3V254.3M1134.3 249.2V251.2M1137.5 243.8V245.8M1139.1 242.8V244.8M1140.6 243.5V245.5M1145.4 252.1V254.1M1147.0 252.3V254.3M1148.5 252.9V254.9M1150.1 253.2V255.2M1151.7 247.3V249.3M1153.3 242.8V244.8M1158.0 239.6V241.6M1162.8 235.9V237.9M1165.9 233.4V235.4M1170.7 238.1V240.1M1172.2 239.4V241.4M1173.8 238.8V240.8M1180.1 239.2V241.2M1183.3 241.5V243.5M1184.9 241.3V243.3M1186.5 242.3V244.3M1188.0 242.1V244.1M1194.4 243.1V245.1M1195.9 243.0V245.0M1197.5 242.2V244.2M1200.7 241.8V243.8M1202.3 241.9V243.9M1203.8 242.4V244.4M1205.4 242.5V244.5M1210.2 250.5V252.5M1211.7 250.6V252.6M1213.3 258.6V260.6M1214.9 261.1V263.1M1218.1 260.8V262.8M1221.2 260.3V262.3M1224.4 265.6V267.6M1227.5 264.7V266.7M1229.1 263.1V265.1M1230.7 260.7V262.7M1233.9 261.2V263.2M1237.0 261.7V263.7M1254.4 251.0V253.0M1267.0 224.1V226.1M1276.5 214.9V216.9M1278.1 214.4V216.4M1298.6 203.6V205.6M1323.9 210.1V212.1M1330.2 221.4V223.4M1331.8 226.2V228.2M1335.0 223.5V225.5M1338.1 217.6V219.6M1346.0 211.3V213.3M1347.6 210.9V212.9M1349.2 211.0V213.0M1357.1 223.6V225.6M1361.8 225.5V227.5M1380.8 199.8V201.8M1382.4 200.0V202.0M1393.4 196.9V198.9M1395.0 193.3V195.3M1399.8 191.5V193.5M1401.3 195.3V197.3M1417.1 200.4V202.4M1425.0 196.1V198.1M1426.6 196.4V198.4M1431.4 193.1V195.1M1432.9 192.5V194.5M1436.1 197.8V199.8M1437.7 199.0V201.0M1439.3 199.5V201.5M1442.4 196.5V198.5M1445.6 197.6V199.6M1450.3 192.6V194.6M1458.2 209.7V211.7M1472.4 213.3V215.3M1478.8 203.0V205.0M1480.3 200.0V202.0M1488.2 191.5V193.5M1499.3 179.7V181.7M1504.0 186.8V188.8M1515.1 205.7V207.7M1516.7 205.7V207.7M1523.0 211.0V213.0M1540.4 229.0V231.0M1551.4 237.7V239.7M1564.1 250.5V252.5M1567.2 243.2V245.2M1568.8 238.3V240.3M1570.4 238.3V240.3M1573.6 240.1V242.1M1575.1 236.5V238.5M1576.7 234.1V236.1M1583.0 227.2V229.2M1590.9 237.4V239.4M1592.5 236.9V238.9M1595.7 239.3V241.3M1597.3 240.3V242.3M1600.4 239.1V241.1M1602.0 239.6V241.6M1605.2 244.1V246.1M1608.3 246.1V248.1M1611.5 248.4V250.4M1613.1 246.7V248.7M1614.6 246.7V248.7M1617.8 247.2V249.2M1619.4 247.1V249.1M1625.7 249.1V251.1M1627.3 250.4V252.4M1632.0 245.9V247.9M1633.6 245.8V247.8M1636.8 247.9V249.9M1638.3 256.3V258.3M1639.9 252.4V254.4M1643.1 245.9V247.9M1644.7 242.6V244.6M1651.0 240.2V242.2M1655.7 237.5V239.5M1657.3 235.0V237.0M1660.5 235.9V237.9M1662.0 236.1V238.1M1665.2 232.3V234.3M1669.9 230.5V232.5M1671.5 229.6V231.6M1673.1 229.3V231.3M1674.7 228.7V230.7M1676.3 227.7V229.7M1679.4 224.4V226.4M1685.7 219.8V221.8M1687.3 218.3V220.3M1690.5 217.8V219.8M1693.6 217.5V219.5M1701.5 219.5V221.5M1704.7 214.1V216.1M1706.3 210.0V212.0M1712.6 218.2V220.2M1715.8 215.6V217.6M1722.1 216.0V218.0M1725.2 217.3V219.3M1726.8 216.8V218.8M1728.4 216.0V218.0M1734.7 209.0V211.0M1736.3 205.9V207.9M1742.6 204.9V206.9M1744.2 205.0V207.0M1747.4 201.8V203.8M1750.5 202.9V204.9M1752.1 203.8V205.8M1753.7 203.7V205.7M1755.3 204.1V206.1M1756.8 205.0V207.0M1760.0 204.0V206.0M1761.6 202.8V204.8M1767.9 204.6V206.6M1772.6 197.2V199.2M1774.2 196.0V198.0M1775.8 194.9V196.9M1777.4 193.8V195.8M1783.7 189.7V191.7M1785.3 190.0V192.0M1788.4 190.7V192.7M1790.0 190.2V192.2M1791.6 189.0V191.0M1794.8 190.1V192.1M1796.3 190.4V192.4M1797.9 184.7V186.7M1801.1 186.5V188.5M1802.7 184.7V186.7M1807.4 184.9V186.9M1810.6 184.0V186.0M1813.7 183.7V185.7M1815.3 183.2V185.2M1816.9 183.7V185.7M1818.5 183.4V185.4M1820.0 183.4V185.4M1823.2 185.4V187.4M1832.7 199.2V201.2M1834.3 199.3V201.3M1835.8 200.5V202.5M1839.0 202.7V204.7M1840.6 202.4V204.4M1843.7 201.8V203.8M1845.3 199.9V201.9M1846.9 199.7V201.7M1848.5 199.2V201.2M1850.1 199.8V201.8M1851.6 196.8V198.8M1854.8 189.7V191.7M1856.4 190.0V192.0M1861.1 191.8V193.8M1862.7 194.3V196.3M1865.9 194.9V196.9M1867.4 194.4V196.4M1875.3 186.6V188.6M1880.1 192.0V194.0M1883.2 190.5V192.5M1889.6 184.3V186.3M1891.1 184.2V186.2M1892.7 186.3V188.3M1899.0 182.0V184.0M1902.2 190.5V192.5" stroke="#f4ee6a" stroke-width="2" fill="none"/>
<path d="M10.0 76.5H1906.5V371.4H10.0Z" stroke="#f4f4f4" stroke-width="1.8" fill="none"/>
<text x="21.0 40.2" y="96.6" text-anchor="middle" font-size="19.2" font-weight="normal" fill="#d8d8d8">時刻</text><text transform="scale(0.8,1)" x="68.2 80.2 92.2 104.2 116.2 128.2 140.2" y="95.8" text-anchor="middle" font-size="20.3" font-weight="normal" fill="#d8d8d8">:06:00 </text><text x="126.6 145.8" y="96.6" text-anchor="middle" font-size="19.2" font-weight="normal" fill="#d8d8d8">始値</text><text transform="scale(0.8,1)" x="200.2 212.2 224.2 236.2 248.2 260.2 272.2 284.2" y="95.8" text-anchor="middle" font-size="20.3" font-weight="normal" fill="#d8d8d8">:25,331 </text><text x="241.8 261.0" y="96.6" text-anchor="middle" font-size="19.2" font-weight="normal" fill="#d8d8d8">高値</text><text transform="scale(0.8,1)" x="344.2 356.2 368.2 380.2 392.2 404.2 416.3 428.3" y="95.8" text-anchor="middle" font-size="20.3" font-weight="normal" fill="#d8d8d8">:25,331 </text><text x="357.0 376.2" y="96.6" text-anchor="middle" font-size="19.2" font-weight="normal" fill="#d8d8d8">安値</text><text transform="scale(0.8,1)" x="488.3 500.3 512.3 524.3 536.3 548.3 560.3 572.3" y="95.8" text-anchor="middle" font-size="20.3" font-weight="normal" fill="#d8d8d8">:25,331 </text><text x="472.2 491.4" y="96.6" text-anchor="middle" font-size="19.2" font-weight="normal" fill="#d8d8d8">終値</text><text transform="scale(0.8,1)" x="632.3 644.3 656.3 668.3 680.3 692.3 704.3" y="95.8" text-anchor="middle" font-size="20.3" font-weight="normal" fill="#d8d8d8">:25,331</text>
<text transform="scale(0.8,1)" x="451.0 463.0" y="362.4" text-anchor="middle" font-size="20.3" font-weight="normal" fill="#e8e8e8">20</text>
<text transform="scale(0.8,1)" x="1934.7 1946.7" y="362.4" text-anchor="middle" font-size="20.3" font-weight="normal" fill="#e8e8e8">21</text>
<text transform="scale(0.8,1)" x="110.0 122.0" y="387.8" text-anchor="middle" font-size="20.3" font-weight="normal" fill="#e4e4e4">01</text>
<text transform="scale(0.8,1)" x="185.6 197.6" y="387.8" text-anchor="middle" font-size="20.3" font-weight="normal" fill="#e4e4e4">02</text>
<text transform="scale(0.8,1)" x="254.6 266.6" y="387.8" text-anchor="middle" font-size="20.3" font-weight="normal" fill="#e4e4e4">03</text>
<text transform="scale(0.8,1)" x="287.9 299.9" y="387.8" text-anchor="middle" font-size="20.3" font-weight="normal" fill="#e4e4e4">04</text>
<text transform="scale(0.8,1)" x="365.5 377.5" y="387.8" text-anchor="middle" font-size="20.3" font-weight="normal" fill="#e4e4e4">05</text>
<text transform="scale(0.8,1)" x="417.2 429.2" y="387.8" text-anchor="middle" font-size="20.3" font-weight="bold" fill="#ffffff" stroke="#ffffff" stroke-width="0.7">06</text>
<text transform="scale(0.8,1)" x="479.0 491.0" y="387.8" text-anchor="middle" font-size="20.3" font-weight="normal" fill="#e4e4e4">09</text>
<text transform="scale(0.8,1)" x="598.0 610.0" y="387.8" text-anchor="middle" font-size="20.3" font-weight="normal" fill="#e4e4e4">10</text>
<text transform="scale(0.8,1)" x="717.0 729.0" y="387.8" text-anchor="middle" font-size="20.3" font-weight="normal" fill="#e4e4e4">11</text>
<text transform="scale(0.8,1)" x="832.4 844.4" y="387.8" text-anchor="middle" font-size="20.3" font-weight="normal" fill="#e4e4e4">12</text>
<text transform="scale(0.8,1)" x="938.0 950.0" y="387.8" text-anchor="middle" font-size="20.3" font-weight="normal" fill="#e4e4e4">13</text>
<text transform="scale(0.8,1)" x="1047.4 1059.4" y="387.8" text-anchor="middle" font-size="20.3" font-weight="normal" fill="#e4e4e4">14</text>
<text transform="scale(0.8,1)" x="1159.9 1171.9" y="387.8" text-anchor="middle" font-size="20.3" font-weight="normal" fill="#e4e4e4">15</text>
<text transform="scale(0.8,1)" x="1242.6 1254.6" y="387.8" text-anchor="middle" font-size="20.3" font-weight="normal" fill="#e4e4e4">17</text>
<text transform="scale(0.8,1)" x="1351.6 1363.6" y="387.8" text-anchor="middle" font-size="20.3" font-weight="normal" fill="#e4e4e4">18</text>
<text transform="scale(0.8,1)" x="1441.5 1453.5" y="387.8" text-anchor="middle" font-size="20.3" font-weight="normal" fill="#e4e4e4">19</text>
<text transform="scale(0.8,1)" x="1515.7 1527.7" y="387.8" text-anchor="middle" font-size="20.3" font-weight="normal" fill="#e4e4e4">20</text>
<text transform="scale(0.8,1)" x="1601.2 1613.2" y="387.8" text-anchor="middle" font-size="20.3" font-weight="normal" fill="#e4e4e4">21</text>
<text transform="scale(0.8,1)" x="1716.9 1728.9" y="387.8" text-anchor="middle" font-size="20.3" font-weight="normal" fill="#e4e4e4">22</text>
<text transform="scale(0.8,1)" x="1826.2 1838.2" y="387.8" text-anchor="middle" font-size="20.3" font-weight="normal" fill="#e4e4e4">23</text>
<text transform="scale(0.8,1)" x="1934.0 1946.0" y="387.8" text-anchor="middle" font-size="20.3" font-weight="normal" fill="#e4e4e4">00</text>
<text transform="scale(0.8,1)" x="2033.1 2045.1" y="387.8" text-anchor="middle" font-size="20.3" font-weight="normal" fill="#e4e4e4">01</text>
<text transform="scale(0.8,1)" x="2099.5 2111.5" y="387.8" text-anchor="middle" font-size="20.3" font-weight="normal" fill="#e4e4e4">02</text>
<text transform="scale(0.8,1)" x="2173.5 2185.5" y="387.8" text-anchor="middle" font-size="20.3" font-weight="normal" fill="#e4e4e4">03</text>
<text transform="scale(0.8,1)" x="2253.5 2265.5" y="387.8" text-anchor="middle" font-size="20.3" font-weight="normal" fill="#e4e4e4">04</text>
<text transform="scale(0.8,1)" x="2322.1 2334.1" y="387.8" text-anchor="middle" font-size="20.3" font-weight="normal" fill="#e4e4e4">05</text>
<text transform="scale(0.8,1)" x="2351.6 2363.6" y="387.8" text-anchor="middle" font-size="20.3" font-weight="normal" fill="#e4e4e4">06</text>
<text transform="scale(0.8,1)" x="2391.6 2403.6 2415.6 2427.6 2439.6 2451.6" y="104.2" text-anchor="middle" font-size="20.3" font-weight="normal" fill="#dcdcdc">25,500</text>
<text transform="scale(0.8,1)" x="2391.6 2403.6 2415.6 2427.6 2439.6 2451.6" y="156.0" text-anchor="middle" font-size="20.3" font-weight="normal" fill="#dcdcdc">25,400</text>
<text transform="scale(0.8,1)" x="2391.6 2403.6 2415.6 2427.6 2439.6 2451.6" y="205.2" text-anchor="middle" font-size="20.3" font-weight="normal" fill="#dcdcdc">25,300</text>
<text transform="scale(0.8,1)" x="2391.6 2403.6 2415.6 2427.6 2439.6 2451.6" y="257.0" text-anchor="middle" font-size="20.3" font-weight="normal" fill="#dcdcdc">25,200</text>
<text transform="scale(0.8,1)" x="2391.6 2403.6 2415.6 2427.6 2439.6 2451.6" y="307.2" text-anchor="middle" font-size="20.3" font-weight="normal" fill="#dcdcdc">25,100</text>
<text transform="scale(0.8,1)" x="2391.6 2403.6 2415.6 2427.6 2439.6 2451.6" y="358.5" text-anchor="middle" font-size="20.3" font-weight="normal" fill="#dcdcdc">25,000</text>
<rect x="1907" y="177.4" width="92.5" height="34" fill="#d3d3d3"/>
<text transform="scale(0.8,1)" x="2411.0 2423.0 2435.0 2447.0 2459.0 2471.0" y="198.2" text-anchor="middle" font-size="21" font-weight="bold" fill="#000" stroke="#000" stroke-width="0.7">25,331</text></g>
<g font-family="'Liberation Sans','IPAGothic',sans-serif"><rect x="9.5" y="403.5" width="1990.0" height="348.0" fill="#1a1a1a"/>
<rect x="10.0" y="404.5" width="1896.5" height="322.5" fill="#000"/>
<g stroke="#c8c8c8" stroke-width="1.5" stroke-dasharray="1.55 1.55" fill="none"><path d="M82.0 405.5V727.0"/><path d="M142.5 405.5V727.0"/><path d="M197.7 405.5V727.0"/><path d="M224.3 405.5V727.0"/><path d="M286.4 405.5V727.0"/><path d="M352.9 405.5V727.0" stroke="#ececec" stroke-width="3.1"/><path d="M377.2 405.5V727.0"/><path d="M472.4 405.5V727.0"/><path d="M567.6 405.5V727.0"/><path d="M659.9 405.5V727.0"/><path d="M744.4 405.5V727.0"/><path d="M831.9 405.5V727.0"/><path d="M921.9 405.5V727.0"/><path d="M988.1 405.5V727.0"/><path d="M1075.3 405.5V727.0"/><path d="M1147.2 405.5V727.0"/><path d="M1206.6 405.5V727.0"/><path d="M1275.0 405.5V727.0"/><path d="M1367.5 405.5V727.0"/><path d="M1455.0 405.5V727.0"/><path d="M1541.2 405.5V727.0"/><path d="M1620.5 405.5V727.0"/><path d="M1673.6 405.5V727.0"/><path d="M1732.8 405.5V727.0"/><path d="M1796.8 405.5V727.0"/><path d="M1851.7 405.5V727.0"/><path d="M1901.5 405.5V727.0"/><path d="M11.0 449.4H1905.5"/><path d="M11.0 541.8H1905.5"/><path d="M11.0 633.9H1905.5"/><path d="M11.0 727.0H1905.5"/></g>
<path d="M43.9 449.6V459.5M66.2 475.6V477.8M68.0 453.8V464.0M141.4 427.3V438.9M270.3 428.2V430.9M276.6 429.1V430.7M1053.6 660.8V662.6M1075.1 627.7V633.1M1090.3 638.5V640.1M1116.6 659.9V661.5M1150.6 634.0V645.3M1204.0 652.4V654.0M1207.9 655.5V661.4M1240.1 628.6V632.7M1241.9 625.9V628.6M1293.8 624.1V629.5M1298.8 605.3V612.5M1322.1 639.9V641.5M1333.0 659.9V662.6M1337.7 649.2V650.8M1395.1 611.6V615.2M1421.5 644.2V646.5M1453.7 659.9V661.5M1459.6 668.9V679.6M1462.7 680.5V690.9M1473.8 708.3V711.0M1494.2 641.1V642.7M1495.8 617.5V634.3M1508.1 647.1V650.1M1658.0 658.2V659.8M1672.1 633.1V640.3M1778.2 609.6V611.6M1789.3 597.1V599.1" stroke="#ff1010" stroke-width="1.7" fill="none"/>
<path d="M1072.9 631.3V638.5M1280.9 625.9V637.6M1378.5 635.8V637.6M1385.7 636.7V651.9M1390.1 638.1V645.6M1409.0 600.5V602.1M1541.8 639.4V642.6M1583.9 631.8V633.4M1677.7 632.0V633.6M1687.1 630.4V632.0M1746.2 622.2V624.0M1841.6 615.7V617.5M1847.7 600.1V602.1M1880.5 587.7V589.7" stroke="#ff1010" stroke-width="3.2" fill="none"/>
<path d="M355.4 651.1V655.3M358.5 640.1V658.0M361.7 617.5V638.4M363.3 616.0V623.6M368.0 610.9V625.0M371.2 597.0V610.9M372.8 587.9V604.2M380.7 599.6V608.4M382.2 595.1V607.2M383.8 586.7V607.7M388.6 593.1V596.2M402.8 573.9V595.4M405.9 562.5V568.7M409.1 565.1V569.4M410.7 556.5V567.4M416.0 562.8V565.3M420.8 558.4V562.8M430.2 561.8V570.8M447.6 553.9V557.3M464.6 566.6V569.0M467.8 557.0V563.3M473.3 545.3V554.4M476.5 547.3V562.7M478.1 544.8V551.1M479.6 540.2V547.4M481.2 540.2V545.0M482.8 535.3V542.5M487.5 526.9V534.0M490.7 543.6V550.1M492.3 536.6V547.7M495.4 543.0V548.3M499.3 565.8V570.1M507.2 560.3V563.6M511.9 550.8V554.4M526.1 526.7V536.4M537.1 520.4V522.8M554.5 521.4V526.7M576.6 527.2V531.8M586.1 522.7V525.1M592.4 524.5V528.9M594.0 524.7V530.5M595.5 518.9V526.1M605.0 530.8V537.8M664.2 539.1V543.3M668.9 544.2V549.9M670.5 546.1V551.6M684.7 553.8V563.4M691.0 550.8V553.9M700.5 556.3V558.7M703.7 551.4V555.8M708.4 554.1V556.5M700.0 551.8V554.2M711.1 554.9V561.4M722.1 574.5V578.2M755.2 569.5V572.3M803.2 592.7V595.1M814.4 579.0V585.8M828.6 589.2V593.3M830.2 585.5V591.0M853.1 595.3V603.3M864.2 591.6V595.4M878.4 585.5V600.5M884.7 568.5V573.4M899.9 618.2V622.9M901.5 603.9V619.2M912.5 611.9V616.4M922.0 609.3V614.0M925.2 605.1V628.1M937.8 631.6V639.8M969.8 629.2V634.4M982.4 629.8V634.8M990.9 671.4V677.8M997.2 667.4V677.9M1003.5 669.4V674.8M1008.3 654.2V670.2M1009.9 643.1V660.0M1035.2 634.8V638.3" stroke="#ff1010" stroke-width="2" fill="none"/>
<path d="M30.4 474.4V476.0M46.2 444.3V448.8M52.3 444.8V446.4M58.5 472.9V474.7M146.8 432.3V433.9M170.1 466.7V468.3M172.2 471.1V472.7M177.2 481.0V483.7M208.6 438.0V440.7M222.9 452.3V453.9M231.8 458.6V460.2M273.0 430.9V432.6M292.2 454.1V455.7M348.2 495.3V498.0M1051.8 653.7V661.7M1065.2 646.5V652.8M1071.5 642.9V644.5M1076.9 632.2V634.0M1098.3 633.1V637.6M1119.8 664.4V670.7M1122.0 670.7V673.4M1152.4 627.4V629.2M1159.6 612.5V617.0M1195.9 649.2V650.8M1263.9 608.9V610.7M1297.4 613.4V617.0M1305.1 597.6V600.0M1306.9 600.9V604.4M1309.9 594.1V610.7M1316.0 631.8V642.0M1332.0 647.4V653.1M1414.0 634.9V636.5M1435.4 650.6V652.2M1456.7 658.2V672.5M1461.4 673.9V675.5M1472.1 694.0V698.4M1484.7 680.2V682.9M1492.4 641.1V647.1M1497.4 618.8V625.0M1528.5 644.2V711.0M1656.4 659.6V661.2M1670.3 639.4V648.3M1829.7 612.8V614.4M989.7 641.0V704.5" stroke="#1e88f0" stroke-width="1.7" fill="none"/>
<path d="M154.5 438.0V448.4M175.1 464.0V490.5M298.1 464.9V468.8M1095.1 634.0V642.9M1226.3 652.4V657.8M1243.3 617.9V619.5M1367.8 633.1V635.8M1380.8 644.7V658.2M1415.2 636.7V645.6M1438.5 651.9V661.4M1527.5 649.2V673.4M1594.8 665.9V668.9M1688.4 625.6V628.3M1743.4 623.8V639.2M1839.9 617.4V619.4M1900.8 580.3V583.2" stroke="#1e88f0" stroke-width="3.2" fill="none"/>
<path d="M357.0 649.1V660.9M366.4 617.5V624.4M374.3 589.7V603.1M375.9 590.5V601.3M377.5 593.6V614.0M379.1 603.1V610.5M385.4 586.8V598.3M387.0 586.6V594.5M391.7 586.5V593.8M396.5 581.0V600.9M399.6 577.8V601.0M401.2 581.2V596.6M404.4 564.2V579.3M407.5 557.2V566.7M427.1 566.0V573.7M441.3 556.6V562.2M458.3 563.9V566.6M471.7 542.1V548.5M474.9 553.5V564.7M486.0 528.2V537.7M489.1 532.6V548.5M493.9 540.7V548.6M516.7 543.2V548.6M519.8 538.9V542.5M524.6 533.8V538.3M527.7 523.1V528.8M532.5 512.6V518.3M549.7 518.4V525.1M563.9 513.4V520.3M575.0 529.7V533.4M578.2 525.6V530.3M579.7 521.2V529.6M600.3 520.2V530.9M601.9 527.9V533.1M603.4 530.9V535.3M611.3 522.4V529.8M617.7 525.8V534.0M619.2 530.9V536.2M638.7 542.4V545.1M640.3 544.4V546.9M641.9 546.5V548.9M648.2 552.7V555.1M678.4 553.3V557.4M680.0 553.1V555.8M681.6 554.3V558.5M683.1 555.8V561.4M689.5 549.9V555.3M695.8 548.1V552.0M706.3 552.2V556.6M747.3 584.0V589.5M753.6 569.9V576.2M756.8 570.2V574.6M759.9 571.4V576.3M785.8 587.0V591.9M790.6 592.5V598.1M796.9 591.4V594.6M819.1 579.6V584.4M833.3 587.1V589.5M859.4 592.0V596.0M870.5 591.0V593.5M873.7 594.5V599.6M883.1 568.1V574.3M892.6 577.4V581.8M895.1 600.3V604.5M896.7 599.8V620.0M907.8 602.6V608.2M909.4 599.8V611.1M920.4 602.3V614.8M923.6 607.4V615.9M933.1 618.6V633.0M934.6 624.2V631.1M936.2 624.3V636.2M941.0 625.6V634.5M942.5 628.9V634.1M945.7 628.3V644.6M954.0 638.2V640.6M974.5 630.8V635.1M1005.1 672.2V682.5M1016.2 647.7V658.3M1017.8 656.0V670.7M1041.6 644.4V648.4M1051.0 653.9V656.5" stroke="#1e88f0" stroke-width="2" fill="none"/>
<path d="M21.1 433.5V435.1M27.2 444.8V446.4M22.4 452.3V453.9M26.0 449.6V451.2M60.0 475.6V477.2M69.5 450.9V452.5M71.1 438.4V440.0M74.3 440.3V441.9M94.5 440.2V441.8M143.2 424.1V425.7M153.1 422.8V424.4M157.0 444.8V446.4M213.0 432.1V433.7M227.0 454.1V455.7M233.6 460.4V462.0M256.0 444.8V446.4M266.7 432.3V433.9M278.4 432.3V433.9M280.2 438.9V440.7M289.1 443.4V445.0M323.1 479.2V480.8M352.7 489.9V491.5M353.6 477.4V479.0M1062.5 649.2V650.8M1064.0 644.7V646.3M1069.7 653.7V655.3M1077.7 624.1V625.7M1082.6 636.7V638.3M1084.0 629.0V630.6M1088.5 638.1V639.7M1092.1 639.9V641.5M1101.6 642.9V644.5M1107.3 644.2V645.8M1109.1 642.9V644.5M1123.8 672.1V673.7M1127.0 674.3V675.9M1128.4 663.2V664.8M1130.0 653.9V655.5M1136.3 649.2V650.8M1137.7 642.9V644.5M1142.6 644.7V646.3M1148.5 641.5V643.1M1153.8 627.4V629.0M1155.1 607.1V608.7M1166.0 607.1V608.7M1172.3 622.7V624.3M1175.3 622.7V624.3M1178.5 633.6V635.2M1189.5 644.7V646.3M1194.1 651.0V652.6M1200.0 658.5V660.1M1206.6 652.4V654.6M1228.7 653.9V655.5M1284.9 625.9V627.5M1289.0 619.7V621.3M1292.6 619.7V621.3M1300.6 594.6V596.2M1303.7 591.6V593.2M1311.4 611.6V613.2M1314.6 624.1V625.7M1320.7 636.7V638.3M1323.9 633.6V635.2M1325.7 636.7V638.3M1330.2 647.8V649.4M1375.8 624.1V626.8M1447.1 653.7V655.3M1458.2 678.7V680.3M1464.4 680.4V682.0M1475.2 699.0V700.6M1477.0 695.7V697.3M1501.9 611.6V613.2M1530.1 653.7V655.3M1630.0 652.2V653.8M1645.6 642.9V644.5M1779.9 604.9V606.9M1781.5 601.6V603.7M1823.4 597.1V599.1M1828.3 601.6V603.7M1831.2 611.1V612.8M474.1 558.0V581.3M1056.2 636.7V637.4" stroke="#f4ee6a" stroke-width="1.7" fill="none"/>
<path d="M36.7 449.6V451.2M105.6 449.6V451.2M121.7 430.9V432.5M148.2 427.6V429.2M259.6 443.0V444.6M284.3 454.1V455.7M302.9 468.1V469.7M317.8 476.5V478.1M1055.7 636.7V638.3M1086.7 632.2V633.8M1113.6 653.7V655.3M1209.0 664.8V666.4M1215.1 658.5V660.1M1233.9 642.9V644.5M1249.1 618.8V620.6M1253.7 622.7V624.3M1276.1 613.4V615.0M1277.4 619.7V621.3M1371.7 653.9V655.5M1382.6 663.2V664.8M1412.0 611.6V613.2M1429.0 644.4V646.0M1481.5 694.3V695.9M1560.4 644.4V646.0M1559.0 649.2V650.8M1574.5 647.4V649.0M1566.7 663.2V664.8M1668.0 642.0V645.6M1676.6 636.7V638.3M1691.8 622.5V624.1M1736.8 622.2V624.0M1749.5 622.2V624.0M1843.1 608.0V610.0M1861.9 600.1V602.1M1872.4 591.0V592.8M1875.9 592.3V594.3M1883.7 594.0V596.0M1896.2 587.7V589.7M1899.6 578.3V580.1M1902.5 603.4V605.2" stroke="#f4ee6a" stroke-width="3.2" fill="none"/>
<path d="M360.1 633.8V635.8M364.9 621.0V623.0M369.6 607.0V609.0M390.1 592.1V594.1M393.3 584.9V586.9M394.9 585.1V587.1M398.0 595.6V597.6M414.4 563.7V565.7M419.2 561.0V563.0M422.3 558.7V560.7M423.9 561.2V563.2M431.8 563.0V565.0M433.4 561.8V563.8M438.1 561.9V563.9M446.0 555.9V557.9M452.4 547.8V549.8M463.0 567.3V569.3M484.4 535.8V537.8M502.4 562.9V564.9M504.0 561.7V563.7M508.8 557.7V559.7M518.2 541.2V543.2M521.4 540.5V542.5M538.7 520.2V522.2M540.2 519.3V521.3M543.4 521.5V523.5M546.6 514.6V516.6M552.9 524.4V526.4M557.6 514.5V516.5M559.2 518.6V520.6M567.1 525.1V527.1M573.4 528.8V530.8M584.5 522.3V524.3M597.1 518.8V520.8M598.7 521.0V523.0M606.6 527.7V529.7M609.8 521.9V523.9M616.1 527.3V529.3M620.8 528.8V530.8M624.0 528.7V530.7M635.5 540.0V542.0M643.4 548.6V550.6M646.6 551.9V553.9M672.1 551.1V553.1M676.8 555.8V557.8M687.9 550.0V552.0M702.1 550.8V552.8M703.2 551.7V553.7M704.7 551.4V553.4M707.9 555.9V557.9M709.5 554.7V556.7M712.6 562.4V564.4M715.8 562.0V564.0M717.4 564.7V566.7M723.7 575.0V577.0M725.3 575.1V577.1M726.9 574.0V576.0M728.4 572.9V574.9M739.4 580.5V582.5M741.0 578.5V580.5M744.1 578.4V580.4M761.5 576.4V578.4M771.6 589.8V591.8M774.8 588.4V590.4M776.3 588.4V590.4M779.5 586.4V588.4M781.1 586.5V588.5M800.0 592.8V594.8M804.8 592.6V594.6M806.4 594.6V596.6M812.8 584.2V586.2M815.9 578.5V580.5M817.5 581.5V583.5M820.7 587.2V589.2M823.8 590.4V592.4M825.4 590.5V592.5M831.7 586.5V588.5M834.9 587.9V589.9M851.5 601.0V603.0M857.9 591.0V593.0M862.6 593.8V595.8M867.3 589.6V591.6M868.9 591.5V593.5M872.1 594.5V596.5M875.2 595.5V597.5M876.8 599.0V601.0M887.9 572.4V574.4M904.6 600.7V602.7M906.2 606.2V608.2M914.1 611.4V613.4M917.3 606.6V608.6M926.7 612.7V614.7M928.3 612.6V614.6M929.9 612.7V614.7M939.4 631.3V633.3M944.1 632.3V634.3M952.4 638.8V640.8M960.3 635.5V637.5M994.1 684.4V686.4M1002.0 672.5V674.5M1006.7 667.5V669.5M1011.4 634.5V636.5M1019.3 657.9V659.9M1024.1 655.9V657.9M1049.5 653.0V655.0M1052.6 657.0V659.0" stroke="#f4ee6a" stroke-width="2" fill="none"/>
<path d="M10.0 404.5H1906.5V727.0H10.0Z" stroke="#f4f4f4" stroke-width="1.8" fill="none"/>
<text x="21.0 40.2" y="424.6" text-anchor="middle" font-size="19.2" font-weight="normal" fill="#d8d8d8">時刻</text><text transform="scale(0.8,1)" x="68.2 80.2 92.2 104.2 116.2 128.2 140.2" y="423.8" text-anchor="middle" font-size="20.3" font-weight="normal" fill="#d8d8d8">:06:00 </text><text x="126.6 145.8" y="424.6" text-anchor="middle" font-size="19.2" font-weight="normal" fill="#d8d8d8">始値</text><text transform="scale(0.8,1)" x="200.2 212.2 224.2 236.2 248.2 260.2 272.2 284.2" y="423.8" text-anchor="middle" font-size="20.3" font-weight="normal" fill="#d8d8d8">:10,533 </text><text x="241.8 261.0" y="424.6" text-anchor="middle" font-size="19.2" font-weight="normal" fill="#d8d8d8">高値</text><text transform="scale(0.8,1)" x="344.2 356.2 368.2 380.2 392.2 404.2 416.3 428.3" y="423.8" text-anchor="middle" font-size="20.3" font-weight="normal" fill="#d8d8d8">:10,533 </text><text x="357.0 376.2" y="424.6" text-anchor="middle" font-size="19.2" font-weight="normal" fill="#d8d8d8">安値</text><text transform="scale(0.8,1)" x="488.3 500.3 512.3 524.3 536.3 548.3 560.3 572.3" y="423.8" text-anchor="middle" font-size="20.3" font-weight="normal" fill="#d8d8d8">:10,533 </text><text x="472.2 491.4" y="424.6" text-anchor="middle" font-size="19.2" font-weight="normal" fill="#d8d8d8">終値</text><text transform="scale(0.8,1)" x="632.3 644.3 656.3 668.3 680.3 692.3 704.3" y="423.8" text-anchor="middle" font-size="20.3" font-weight="normal" fill="#d8d8d8">:10,533</text>
<text transform="scale(0.8,1)" x="451.0 463.0" y="718.0" text-anchor="middle" font-size="20.3" font-weight="normal" fill="#e8e8e8">20</text>
<text transform="scale(0.8,1)" x="1934.7 1946.7" y="718.0" text-anchor="middle" font-size="20.3" font-weight="normal" fill="#e8e8e8">21</text>
<text transform="scale(0.8,1)" x="110.0 122.0" y="743.4" text-anchor="middle" font-size="20.3" font-weight="normal" fill="#e4e4e4">01</text>
<text transform="scale(0.8,1)" x="185.6 197.6" y="743.4" text-anchor="middle" font-size="20.3" font-weight="normal" fill="#e4e4e4">02</text>
<text transform="scale(0.8,1)" x="254.6 266.6" y="743.4" text-anchor="middle" font-size="20.3" font-weight="normal" fill="#e4e4e4">03</text>
<text transform="scale(0.8,1)" x="287.9 299.9" y="743.4" text-anchor="middle" font-size="20.3" font-weight="normal" fill="#e4e4e4">04</text>
<text transform="scale(0.8,1)" x="365.5 377.5" y="743.4" text-anchor="middle" font-size="20.3" font-weight="normal" fill="#e4e4e4">05</text>
<text transform="scale(0.8,1)" x="417.2 429.2" y="743.4" text-anchor="middle" font-size="20.3" font-weight="bold" fill="#ffffff" stroke="#ffffff" stroke-width="0.7">06</text>
<text transform="scale(0.8,1)" x="479.0 491.0" y="743.4" text-anchor="middle" font-size="20.3" font-weight="normal" fill="#e4e4e4">09</text>
<text transform="scale(0.8,1)" x="598.0 610.0" y="743.4" text-anchor="middle" font-size="20.3" font-weight="normal" fill="#e4e4e4">10</text>
<text transform="scale(0.8,1)" x="717.0 729.0" y="743.4" text-anchor="middle" font-size="20.3" font-weight="normal" fill="#e4e4e4">11</text>
<text transform="scale(0.8,1)" x="832.4 844.4" y="743.4" text-anchor="middle" font-size="20.3" font-weight="normal" fill="#e4e4e4">12</text>
<text transform="scale(0.8,1)" x="938.0 950.0" y="743.4" text-anchor="middle" font-size="20.3" font-weight="normal" fill="#e4e4e4">13</text>
<text transform="scale(0.8,1)" x="1047.4 1059.4" y="743.4" text-anchor="middle" font-size="20.3" font-weight="normal" fill="#e4e4e4">14</text>
<text transform="scale(0.8,1)" x="1159.9 1171.9" y="743.4" text-anchor="middle" font-size="20.3" font-weight="normal" fill="#e4e4e4">15</text>
<text transform="scale(0.8,1)" x="1242.6 1254.6" y="743.4" text-anchor="middle" font-size="20.3" font-weight="normal" fill="#e4e4e4">17</text>
<text transform="scale(0.8,1)" x="1351.6 1363.6" y="743.4" text-anchor="middle" font-size="20.3" font-weight="normal" fill="#e4e4e4">18</text>
<text transform="scale(0.8,1)" x="1441.5 1453.5" y="743.4" text-anchor="middle" font-size="20.3" font-weight="normal" fill="#e4e4e4">19</text>
<text transform="scale(0.8,1)" x="1515.7 1527.7" y="743.4" text-anchor="middle" font-size="20.3" font-weight="normal" fill="#e4e4e4">20</text>
<text transform="scale(0.8,1)" x="1601.2 1613.2" y="743.4" text-anchor="middle" font-size="20.3" font-weight="normal" fill="#e4e4e4">21</text>
<text transform="scale(0.8,1)" x="1716.9 1728.9" y="743.4" text-anchor="middle" font-size="20.3" font-weight="normal" fill="#e4e4e4">22</text>
<text transform="scale(0.8,1)" x="1826.2 1838.2" y="743.4" text-anchor="middle" font-size="20.3" font-weight="normal" fill="#e4e4e4">23</text>
<text transform="scale(0.8,1)" x="1934.0 1946.0" y="743.4" text-anchor="middle" font-size="20.3" font-weight="normal" fill="#e4e4e4">00</text>
<text transform="scale(0.8,1)" x="2033.1 2045.1" y="743.4" text-anchor="middle" font-size="20.3" font-weight="normal" fill="#e4e4e4">01</text>
<text transform="scale(0.8,1)" x="2099.5 2111.5" y="743.4" text-anchor="middle" font-size="20.3" font-weight="normal" fill="#e4e4e4">02</text>
<text transform="scale(0.8,1)" x="2173.5 2185.5" y="743.4" text-anchor="middle" font-size="20.3" font-weight="normal" fill="#e4e4e4">03</text>
<text transform="scale(0.8,1)" x="2253.5 2265.5" y="743.4" text-anchor="middle" font-size="20.3" font-weight="normal" fill="#e4e4e4">04</text>
<text transform="scale(0.8,1)" x="2322.1 2334.1" y="743.4" text-anchor="middle" font-size="20.3" font-weight="normal" fill="#e4e4e4">05</text>
<text transform="scale(0.8,1)" x="2351.6 2363.6" y="743.4" text-anchor="middle" font-size="20.3" font-weight="normal" fill="#e4e4e4">06</text>
<text transform="scale(0.8,1)" x="2391.6 2403.6 2415.6 2427.6 2439.6 2451.6" y="445.9" text-anchor="middle" font-size="20.3" font-weight="normal" fill="#dcdcdc">10,700</text>
<text transform="scale(0.8,1)" x="2391.6 2403.6 2415.6 2427.6 2439.6 2451.6" y="538.3" text-anchor="middle" font-size="20.3" font-weight="normal" fill="#dcdcdc">10,600</text>
<text transform="scale(0.8,1)" x="2391.6 2403.6 2415.6 2427.6 2439.6 2451.6" y="630.4" text-anchor="middle" font-size="20.3" font-weight="normal" fill="#dcdcdc">10,500</text>
<text transform="scale(0.8,1)" x="2391.6 2403.6 2415.6 2427.6 2439.6 2451.6" y="723.5" text-anchor="middle" font-size="20.3" font-weight="normal" fill="#dcdcdc">10,400</text>
<rect x="1907" y="587.3" width="92.5" height="34" fill="#d3d3d3"/>
<text transform="scale(0.8,1)" x="2411.0 2423.0 2435.0 2447.0 2459.0 2471.0" y="608.1" text-anchor="middle" font-size="21" font-weight="bold" fill="#000" stroke="#000" stroke-width="0.7">10,533</text></g>
<g font-family="'Liberation Sans','IPAGothic',sans-serif"><rect x="9.5" y="759.5" width="1990.0" height="314.0" fill="#1a1a1a"/>
<rect x="10.0" y="761.0" width="1896.5" height="288.0" fill="#000"/>
<g stroke="#c8c8c8" stroke-width="1.5" stroke-dasharray="1.55 1.55" fill="none"><path d="M82.0 762.0V1049.0"/><path d="M142.5 762.0V1049.0"/><path d="M197.7 762.0V1049.0"/><path d="M224.3 762.0V1049.0"/><path d="M286.4 762.0V1049.0"/><path d="M352.9 762.0V1049.0" stroke="#ececec" stroke-width="3.1"/><path d="M377.2 762.0V1049.0"/><path d="M472.4 762.0V1049.0"/><path d="M567.6 762.0V1049.0"/><path d="M659.9 762.0V1049.0"/><path d="M744.4 762.0V1049.0"/><path d="M831.9 762.0V1049.0"/><path d="M921.9 762.0V1049.0"/><path d="M988.1 762.0V1049.0"/><path d="M1075.3 762.0V1049.0"/><path d="M1147.2 762.0V1049.0"/><path d="M1206.6 762.0V1049.0"/><path d="M1275.0 762.0V1049.0"/><path d="M1367.5 762.0V1049.0"/><path d="M1455.0 762.0V1049.0"/><path d="M1541.2 762.0V1049.0"/><path d="M1620.5 762.0V1049.0"/><path d="M1673.6 762.0V1049.0"/><path d="M1732.8 762.0V1049.0"/><path d="M1796.8 762.0V1049.0"/><path d="M1851.7 762.0V1049.0"/><path d="M1901.5 762.0V1049.0"/><path d="M11.0 774.0H1905.5"/><path d="M11.0 843.2H1905.5"/><path d="M11.0 913.0H1905.5"/><path d="M11.0 983.8H1905.5"/><path d="M11.0 1049.0H1905.5"/></g>
<path d="M13.4 861.1 L15.2 859.6 L17.0 862.9 L19.2 863.7 L21.5 869.2 L24.2 858.5 L26.9 854.9 L29.5 859.4 L31.3 850.2 L33.1 845.9 L35.8 838.8 L38.5 841.5 L40.3 845.0 L42.1 848.6 L44.8 845.9 L46.2 851.3 L48.3 839.7 L50.1 839.2 L51.9 838.8 L53.7 839.1 L55.5 844.1 L57.6 859.4 L60.0 847.7 L62.7 846.8 L65.3 844.1 L67.7 841.5 L68.9 851.3 L71.6 856.7 L73.4 854.0 L75.2 851.3 L77.0 845.7 L78.8 843.2 L81.5 847.7 L84.1 856.7 L86.8 845.9 L88.6 844.4 L90.4 847.7 L93.1 848.6 L94.9 837.0 L97.6 831.6 L99.8 831.9 L102.0 828.9 L103.8 831.2 L105.6 833.4 L107.4 834.0 L109.2 837.9 L111.9 837.0 L114.6 840.6 L117.3 838.8 L119.5 838.5 L121.7 841.5 L123.5 854.0 L126.2 855.8 L128.0 853.1 L129.8 865.6 L131.6 872.8 L133.8 875.2 L136.1 872.8 L138.7 869.2 L140.5 865.9 L142.3 867.4 L144.1 873.7 L146.8 865.6 L148.6 861.1 L150.4 864.3 L152.2 867.4 L154.4 863.6 L156.6 862.9 L159.3 862.0 L161.1 867.4 L163.8 862.0 L166.5 854.9 L169.2 857.6 L171.9 844.1 L174.5 838.8 L177.2 845.0 L179.0 842.5 L180.8 843.2 L183.5 836.1 L186.2 828.9 L188.9 822.7 L190.7 824.6 L192.4 829.8 L195.1 840.6 L197.8 831.6 L200.5 824.4 L203.2 816.4 L205.9 817.3 L207.7 811.9 L208.6 824.4 L209.5 838.8 L211.2 853.1 L213.9 863.8 L216.6 859.4 L218.9 857.3 L221.1 858.5 L223.8 844.1 L226.5 842.3 L228.2 842.3 L230.0 842.3 L232.7 843.2 L235.4 845.9 L238.1 849.5 L239.9 849.5 L241.7 849.5 L243.5 845.2 L245.3 844.1 L247.0 841.3 L248.8 843.2 L250.6 843.1 L252.4 839.7 L255.1 838.8 L257.8 843.2 L260.5 839.7 L263.2 834.3 L265.8 833.4 L268.5 838.8 L270.3 840.8 L272.1 847.7 L274.8 845.9 L277.0 845.9 L279.3 845.9 L281.5 847.7 L283.7 849.5 L286.4 840.6 L289.1 837.9 L291.8 844.1 L294.5 847.7 L297.2 854.0 L299.9 844.1 L301.6 844.8 L303.4 842.3 L306.1 853.1 L308.8 854.0 L311.5 839.7 L314.2 849.5 L316.9 851.3 L319.5 844.1 L321.3 841.7 L323.1 842.5 L324.9 844.1 L327.6 856.7 L329.4 855.5 L331.2 857.6 L333.0 860.5 L334.8 868.3 L337.5 874.6 L340.1 872.8 L340.0 872.5 L341.8 877.4 L343.6 881.5 L345.4 882.4 L347.2 874.1 L349.0 869.0 L351.6 867.2 L352.5 879.7 L354.0 821.5 L355.4 885.1 L356.1 1022.9 L358.8 1008.6 L361.1 1021.1 L363.3 997.8 L365.4 1015.7 L367.7 1003.2 L370.4 1014.0 L373.1 1005.0 L375.8 1014.0 L377.2 999.6 L379.7 1010.4 L381.5 1022.9 L384.4 1030.1 L386.9 1026.5 L388.7 1016.6 L390.3 1020.9 L391.9 1022.0 L394.6 1019.3 L397.3 1005.9 L399.4 1017.5 L401.0 1019.1 L402.7 1017.5 L404.8 1034.5 L407.1 1033.6 L408.9 1022.9 L411.6 1023.8 L414.3 1015.7 L417.0 1008.6 L418.8 1001.4 L421.5 1007.7 L423.2 1006.3 L425.0 1005.0 L427.4 988.9 L430.4 993.4 L432.2 1003.2 L434.9 1013.1 L437.6 1003.2 L439.4 1007.1 L441.1 1007.7 L442.9 1007.9 L444.7 1011.3 L447.0 1011.0 L449.2 1014.0 L451.0 1012.8 L452.8 1014.9 L455.5 1024.7 L458.2 1028.3 L459.9 1029.3 L461.7 1025.6 L464.4 1015.7 L467.1 1021.1 L469.3 1027.4 L470.7 1014.0 L472.5 999.6 L474.3 983.5 L475.2 976.4 L477.8 974.6 L478.7 963.8 L481.4 957.6 L484.1 967.4 L485.9 975.5 L487.7 965.6 L490.4 951.3 L493.1 938.8 L494.9 928.0 L497.5 922.7 L499.3 920.5 L501.1 923.1 L502.9 920.9 L504.7 922.7 L506.5 918.1 L508.3 919.1 L511.0 908.3 L512.8 910.3 L514.5 915.5 L516.3 904.8 L518.1 898.7 L519.9 895.8 L522.6 892.2 L524.8 892.7 L527.1 893.1 L528.9 910.1 L531.6 915.5 L534.2 921.8 L536.0 921.3 L537.8 920.9 L539.1 909.2 L540.7 906.7 L542.4 905.0 L544.1 906.5 L546.8 897.6 L549.0 900.9 L551.2 899.4 L553.0 901.8 L554.8 901.8 L556.6 899.4 L558.9 896.9 L561.1 897.6 L562.9 907.4 L564.7 908.6 L566.5 911.4 L568.2 911.0 L570.9 902.1 L573.6 903.0 L575.4 917.3 L578.1 924.4 L579.9 927.4 L581.7 927.1 L583.5 926.0 L585.3 928.0 L587.9 937.0 L590.6 940.6 L592.4 940.4 L594.2 937.0 L596.9 933.4 L598.7 940.6 L600.5 941.7 L602.3 939.7 L604.1 929.8 L606.7 921.8 L609.4 926.2 L612.1 937.0 L614.8 939.7 L616.6 939.9 L618.4 943.2 L621.1 937.0 L622.8 938.9 L624.6 936.1 L626.4 937.2 L628.2 941.5 L630.0 944.6 L631.8 947.7 L633.6 947.7 L635.4 947.7 L637.2 944.6 L639.0 943.1 L640.8 943.2 L642.5 942.5 L644.3 945.0 L647.0 937.0 L649.7 932.5 L651.5 928.3 L653.3 928.9 L655.1 929.7 L656.9 935.2 L659.5 930.7 L662.2 923.6 L664.0 930.3 L665.8 937.0 L667.6 934.7 L669.4 932.5 L671.6 933.2 L673.9 938.8 L675.7 937.9 L677.5 937.0 L680.1 940.6 L681.9 940.1 L683.7 939.7 L685.9 945.0 L688.2 937.9 L690.0 931.6 L691.8 932.6 L693.6 928.9 L696.3 932.5 L698.1 932.6 L699.8 928.0 L701.6 928.6 L703.4 932.5 L706.1 943.2 L707.7 947.4 L709.3 946.8 L711.5 936.1 L713.3 934.9 L715.1 928.9 L716.9 926.2 L718.6 923.5 L721.3 928.9 L723.1 926.0 L724.9 926.2 L726.7 928.3 L728.5 927.1 L731.5 932.5 L733.1 929.6 L734.8 923.5 L736.4 926.4 L738.0 932.5 L739.9 930.7 L741.9 928.9 L743.7 925.3 L745.5 921.7 L747.3 911.0 L749.4 909.2 L751.8 918.2 L753.6 921.7 L755.3 918.9 L757.1 921.7 L759.4 918.8 L761.6 919.0 L763.2 922.6 L764.8 926.2 L767.9 918.2 L770.1 917.7 L772.3 917.3 L775.0 911.9 L777.7 909.2 L779.5 908.1 L781.3 911.9 L784.0 911.0 L786.7 906.5 L789.4 911.0 L792.0 923.5 L794.7 919.9 L797.4 925.3 L799.6 923.8 L801.9 919.0 L803.7 916.6 L805.5 917.3 L808.5 913.7 L810.1 919.3 L811.7 921.7 L813.9 926.2 L816.2 917.3 L818.9 921.7 L821.1 923.3 L823.4 921.7 L825.2 924.1 L826.9 920.1 L828.7 921.7 L830.5 923.7 L832.3 928.9 L834.1 923.7 L835.9 921.7 L838.6 926.2 L840.8 927.1 L843.1 928.0 L845.3 928.0 L847.5 928.0 L850.2 933.4 L852.0 930.0 L853.8 929.8 L855.6 929.6 L857.4 926.2 L859.2 930.9 L861.0 932.5 L862.8 930.5 L864.5 933.4 L866.3 935.6 L868.1 937.8 L869.9 934.1 L871.7 935.2 L873.5 934.3 L875.3 933.4 L877.6 925.3 L878.3 916.4 L880.1 917.0 L881.9 912.8 L883.0 927.1 L885.0 927.1 L886.9 927.1 L888.7 924.9 L890.5 922.6 L893.2 925.3 L895.0 929.6 L896.8 930.7 L899.5 936.1 L902.1 943.2 L903.9 943.2 L905.7 943.2 L908.0 934.3 L911.1 937.8 L913.8 928.0 L915.6 925.8 L917.4 923.5 L919.1 921.7 L920.9 919.9 L923.6 931.6 L926.3 923.5 L928.1 919.0 L929.9 914.6 L931.5 910.1 L933.1 905.6 L935.1 908.9 L937.0 907.4 L939.7 900.3 L942.4 903.8 L944.6 890.4 L946.9 896.7 L948.7 903.8 L950.5 901.0 L952.3 902.9 L954.9 911.9 L956.7 910.7 L958.5 912.8 L960.8 916.1 L963.0 914.6 L965.2 915.2 L967.5 919.0 L969.3 917.9 L971.1 919.9 L972.8 917.4 L974.6 918.2 L976.4 906.5 L979.1 913.7 L980.9 911.6 L982.7 912.8 L985.4 909.2 L987.0 915.7 L988.6 919.0 L989.9 903.8 L990.8 871.6 L993.4 867.1 L996.1 871.6 L998.3 877.9 L999.9 878.8 L1001.5 879.7 L1004.2 887.7 L1006.5 871.6 L1008.7 885.9 L1010.4 900.3 L1012.2 906.5 L1014.9 904.7 L1017.6 896.7 L1019.4 887.7 L1021.0 886.1 L1022.6 879.7 L1025.7 890.4 L1028.3 887.7 L1031.0 884.1 L1033.7 898.5 L1036.4 904.7 L1039.1 901.1 L1040.0 901.6 L1041.8 886.4 L1043.6 882.8 L1045.8 883.9 L1048.1 881.9 L1050.7 875.6 L1053.4 871.1 L1055.8 877.4 L1057.4 886.4 L1059.7 881.0 L1062.4 873.8 L1064.2 868.5 L1066.9 872.0 L1069.5 868.1 L1072.2 871.1 L1074.0 882.8 L1075.8 885.6 L1077.6 883.7 L1080.3 889.0 L1082.5 886.6 L1084.8 889.0 L1086.5 888.9 L1088.3 885.5 L1090.6 884.6 L1092.8 883.7 L1094.6 879.8 L1096.4 879.2 L1098.2 882.8 L1100.9 889.9 L1102.7 886.8 L1104.4 883.7 L1106.2 885.5 L1108.0 887.3 L1110.3 885.3 L1112.5 888.2 L1115.2 897.1 L1117.4 900.0 L1119.7 906.1 L1121.5 895.3 L1124.1 888.2 L1125.9 888.0 L1127.7 884.6 L1130.4 897.1 L1132.2 891.7 L1134.9 884.6 L1137.6 881.0 L1139.8 881.9 L1142.0 882.8 L1144.7 891.7 L1146.5 894.4 L1148.3 897.1 L1150.1 899.1 L1151.9 904.3 L1153.7 907.8 L1154.9 898.0 L1157.3 906.9 L1159.9 907.8 L1162.6 895.3 L1164.4 889.9 L1167.1 897.1 L1169.8 902.5 L1172.5 906.1 L1174.3 895.3 L1176.1 891.9 L1177.8 891.7 L1179.6 881.9 L1182.3 884.6 L1184.1 888.0 L1185.9 888.2 L1188.1 889.2 L1190.4 885.5 L1192.2 881.7 L1194.0 882.8 L1196.6 877.4 L1198.4 877.0 L1200.2 876.5 L1202.0 872.2 L1203.8 871.1 L1206.5 875.6 L1209.2 879.2 L1211.0 876.7 L1212.8 877.4 L1214.5 891.7 L1217.2 898.0 L1219.9 895.3 L1222.2 892.6 L1224.4 900.7 L1227.1 904.3 L1229.8 906.1 L1232.4 900.7 L1235.1 907.8 L1237.8 910.5 L1240.5 908.7 L1243.2 915.0 L1245.9 920.4 L1247.7 920.4 L1249.5 920.4 L1252.1 915.0 L1253.9 913.9 L1255.7 909.6 L1258.4 902.5 L1261.1 896.2 L1262.9 896.5 L1264.7 893.5 L1267.0 891.7 L1268.2 881.0 L1270.9 873.8 L1273.6 872.0 L1276.3 866.7 L1279.0 864.9 L1281.7 857.7 L1283.5 861.3 L1286.2 872.0 L1287.9 864.9 L1289.7 862.2 L1291.5 859.5 L1293.3 851.5 L1295.6 839.8 L1297.8 848.8 L1299.6 857.7 L1301.4 855.7 L1303.2 856.8 L1305.8 848.8 L1307.6 825.5 L1310.3 832.7 L1313.0 841.6 L1315.7 847.0 L1317.9 848.6 L1320.2 847.0 L1322.0 846.1 L1323.7 845.2 L1326.0 844.6 L1328.2 848.8 L1330.0 853.2 L1331.8 850.8 L1333.6 845.2 L1336.3 838.9 L1339.0 844.3 L1340.8 833.6 L1343.4 832.7 L1346.1 840.7 L1348.8 832.7 L1351.5 841.6 L1354.2 845.2 L1356.9 851.5 L1359.5 853.2 L1361.3 851.0 L1363.1 848.8 L1365.8 853.2 L1367.6 855.7 L1369.4 861.3 L1372.1 848.8 L1373.9 838.0 L1375.7 840.9 L1377.5 847.0 L1379.2 830.9 L1381.9 823.7 L1384.6 807.6 L1387.3 823.7 L1389.1 827.3 L1390.0 825.9 L1392.7 831.2 L1394.5 823.2 L1396.3 833.0 L1398.1 831.5 L1399.8 834.8 L1402.5 842.0 L1404.7 850.9 L1407.0 840.2 L1409.7 834.8 L1412.4 842.0 L1415.1 827.7 L1417.7 816.9 L1419.5 811.5 L1421.9 808.0 L1424.0 816.9 L1426.2 826.8 L1428.5 818.7 L1430.3 817.6 L1432.1 813.3 L1433.9 814.5 L1435.6 812.4 L1438.3 816.0 L1441.0 807.1 L1443.7 811.5 L1446.4 806.2 L1449.1 803.5 L1451.8 808.9 L1453.6 810.8 L1455.3 816.0 L1457.1 813.1 L1458.9 813.3 L1460.7 811.3 L1462.5 812.4 L1463.8 796.3 L1465.4 792.6 L1467.0 793.6 L1469.7 804.4 L1471.5 802.8 L1473.2 804.4 L1474.5 792.7 L1476.3 807.1 L1478.6 791.9 L1479.5 782.0 L1481.3 784.1 L1483.1 782.9 L1485.8 795.4 L1488.5 784.7 L1490.3 782.9 L1492.0 774.0 L1493.8 784.7 L1494.7 797.2 L1497.4 808.0 L1500.1 813.3 L1502.8 819.6 L1505.5 828.6 L1506.4 843.8 L1509.0 843.8 L1509.6 820.5 L1511.6 822.1 L1513.5 820.5 L1515.3 822.7 L1517.1 825.0 L1518.9 836.6 L1520.7 833.7 L1522.5 833.9 L1524.3 840.2 L1526.9 831.2 L1529.3 827.7 L1530.2 845.6 L1531.4 856.3 L1533.2 843.8 L1535.9 847.3 L1537.7 858.1 L1540.4 854.5 L1542.2 865.3 L1544.9 862.6 L1546.6 872.4 L1547.9 884.0 L1549.5 881.6 L1551.1 882.3 L1553.8 886.7 L1555.6 877.8 L1558.3 874.2 L1560.1 861.7 L1561.5 868.8 L1562.8 890.3 L1565.0 887.9 L1567.2 890.3 L1568.1 876.0 L1569.0 864.4 L1570.8 864.6 L1572.6 861.7 L1574.4 864.5 L1576.2 870.6 L1578.0 862.6 L1580.2 860.3 L1582.4 858.1 L1585.1 865.3 L1586.9 877.8 L1589.2 880.3 L1591.4 879.6 L1594.1 884.0 L1595.9 872.4 L1596.8 859.9 L1599.5 858.1 L1601.7 861.9 L1603.9 862.6 L1605.7 864.1 L1607.5 868.8 L1609.3 865.1 L1611.1 866.1 L1613.8 872.4 L1616.5 868.8 L1619.1 872.4 L1621.8 864.4 L1624.5 868.8 L1626.8 869.0 L1629.0 872.4 L1631.7 879.6 L1634.4 884.0 L1637.0 886.7 L1638.8 893.9 L1641.5 884.9 L1643.3 886.4 L1645.1 883.2 L1647.8 874.2 L1649.6 874.4 L1651.4 877.8 L1654.1 882.3 L1656.7 877.8 L1658.2 859.0 L1660.1 858.4 L1662.1 862.6 L1664.8 860.8 L1667.5 854.5 L1668.9 863.5 L1672.0 865.3 L1674.6 870.6 L1676.4 869.9 L1678.2 872.4 L1680.9 865.3 L1682.7 866.8 L1684.5 863.5 L1686.3 863.6 L1688.1 859.0 L1690.3 860.5 L1692.5 865.3 L1694.3 863.1 L1696.1 862.5 L1697.9 863.5 L1700.2 861.4 L1702.4 862.6 L1704.2 866.1 L1706.0 856.3 L1708.3 853.6 L1710.4 864.4 L1712.2 870.6 L1714.0 865.9 L1715.8 864.4 L1717.6 863.7 L1719.4 859.9 L1720.0 858.1 L1723.0 862.1 L1726.1 866.2 L1728.1 867.1 L1730.2 863.1 L1732.7 864.1 L1734.2 869.2 L1735.2 855.0 L1736.8 847.9 L1738.3 843.8 L1740.1 846.7 L1741.8 846.4 L1744.4 839.8 L1746.4 835.7 L1747.4 846.9 L1750.0 841.8 L1752.5 845.9 L1755.6 850.4 L1758.6 846.9 L1761.6 846.4 L1763.7 841.8 L1766.7 839.8 L1768.2 847.9 L1770.3 842.8 L1771.8 837.7 L1773.8 834.7 L1775.9 837.1 L1777.9 834.7 L1780.4 840.8 L1783.0 841.8 L1784.8 838.6 L1786.5 840.3 L1788.3 839.9 L1790.1 844.3 L1793.1 842.8 L1795.4 841.7 L1797.7 845.4 L1798.7 836.7 L1801.8 837.7 L1804.3 835.2 L1807.4 836.7 L1809.4 839.8 L1811.9 835.7 L1814.5 833.7 L1817.0 831.6 L1820.1 834.2 L1821.8 832.8 L1823.6 834.7 L1826.1 837.7 L1827.2 846.9 L1830.2 847.9 L1832.5 847.3 L1834.8 849.9 L1836.6 852.5 L1838.3 852.0 L1841.4 845.9 L1843.4 849.9 L1846.5 852.0 L1849.5 858.1 L1851.5 855.0 L1853.1 847.9 L1855.1 842.8 L1858.1 842.3 L1859.9 839.7 L1861.7 840.3 L1863.7 844.9 L1865.8 850.4 L1868.8 848.9 L1870.6 844.5 L1872.4 844.9 L1874.1 842.0 L1875.9 842.3 L1878.5 842.8 L1880.5 853.0 L1883.0 853.0 L1885.6 845.9 L1887.6 840.8 L1890.6 839.8 L1893.2 837.7 L1895.7 841.8 L1898.8 842.8 L1900.8 845.4 L1902.8 840.8 L1904.9 843.3" stroke="#ff0000" stroke-width="3.1" shape-rendering="crispEdges" fill="none" stroke-linejoin="miter" stroke-miterlimit="2" stroke-linecap="square"/>
<path d="M10.0 761.0H1906.5V1049.0H10.0Z" stroke="#f4f4f4" stroke-width="1.8" fill="none"/>
<text transform="scale(0.8,1)" x="20.2" y="780.3" text-anchor="middle" font-size="20.3" font-weight="normal" fill="#d8d8d8">[</text><text x="30.6" y="781.1" text-anchor="middle" font-size="19.2" font-weight="normal" fill="#d8d8d8">金</text><text transform="scale(0.8,1)" x="56.2 68.2 80.2 92.2 104.2 116.2 128.2 140.2 152.2 164.2 176.2 188.2 200.2" y="780.3" text-anchor="middle" font-size="20.3" font-weight="normal" fill="#d8d8d8"> 27/02 25,331</text><text x="174.6" y="782.1" text-anchor="middle" font-size="25" fill="#d8d8d8">×</text><text transform="scale(0.8,1)" x="236.2 248.2 260.2 272.2 284.2" y="780.3" text-anchor="middle" font-size="20.3" font-weight="normal" fill="#d8d8d8">1.00]</text><text x="241.8" y="781.1" text-anchor="middle" font-size="19.2" font-weight="normal" fill="#d8d8d8">－</text><text transform="scale(0.8,1)" x="320.2" y="780.3" text-anchor="middle" font-size="20.3" font-weight="normal" fill="#d8d8d8">[</text><text x="270.6 289.8" y="781.1" text-anchor="middle" font-size="19.2" font-weight="normal" fill="#d8d8d8">白金</text><text transform="scale(0.8,1)" x="380.2 392.2 404.2 416.2 428.2 440.2 452.2 464.2 476.3 488.3 500.3 512.3 524.3" y="780.3" text-anchor="middle" font-size="20.3" font-weight="normal" fill="#d8d8d8"> 27/02 10,533</text><text x="433.8" y="782.1" text-anchor="middle" font-size="25" fill="#d8d8d8">×</text><text transform="scale(0.8,1)" x="560.3 572.3 584.3 596.3 608.3 620.3" y="780.3" text-anchor="middle" font-size="20.3" font-weight="normal" fill="#d8d8d8">1.00] </text><text x="510.6 529.8" y="781.1" text-anchor="middle" font-size="19.2" font-weight="normal" fill="#d8d8d8">終値</text><text x="558.6 577.8" y="781.1" text-anchor="middle" font-size="19.2" font-weight="normal" fill="#d8d8d8">時刻</text><text transform="scale(0.8,1)" x="740.3 752.3 764.3 776.3 788.3 800.3 812.3 824.3 836.3 848.3 860.3 872.3 884.3" y="780.3" text-anchor="middle" font-size="20.3" font-weight="normal" fill="#d8d8d8">:06:00 14,798</text>
<text transform="scale(0.8,1)" x="451.0 463.0" y="1040.0" text-anchor="middle" font-size="20.3" font-weight="normal" fill="#e8e8e8">20</text>
<text transform="scale(0.8,1)" x="1934.7 1946.7" y="1040.0" text-anchor="middle" font-size="20.3" font-weight="normal" fill="#e8e8e8">21</text>
<text transform="scale(0.8,1)" x="110.0 122.0" y="1065.4" text-anchor="middle" font-size="20.3" font-weight="normal" fill="#e4e4e4">01</text>
<text transform="scale(0.8,1)" x="185.6 197.6" y="1065.4" text-anchor="middle" font-size="20.3" font-weight="normal" fill="#e4e4e4">02</text>
<text transform="scale(0.8,1)" x="254.6 266.6" y="1065.4" text-anchor="middle" font-size="20.3" font-weight="normal" fill="#e4e4e4">03</text>
<text transform="scale(0.8,1)" x="287.9 299.9" y="1065.4" text-anchor="middle" font-size="20.3" font-weight="normal" fill="#e4e4e4">04</text>
<text transform="scale(0.8,1)" x="365.5 377.5" y="1065.4" text-anchor="middle" font-size="20.3" font-weight="normal" fill="#e4e4e4">05</text>
<text transform="scale(0.8,1)" x="417.2 429.2" y="1065.4" text-anchor="middle" font-size="20.3" font-weight="bold" fill="#ffffff" stroke="#ffffff" stroke-width="0.7">06</text>
<text transform="scale(0.8,1)" x="479.0 491.0" y="1065.4" text-anchor="middle" font-size="20.3" font-weight="normal" fill="#e4e4e4">09</text>
<text transform="scale(0.8,1)" x="598.0 610.0" y="1065.4" text-anchor="middle" font-size="20.3" font-weight="normal" fill="#e4e4e4">10</text>
<text transform="scale(0.8,1)" x="717.0 729.0" y="1065.4" text-anchor="middle" font-size="20.3" font-weight="normal" fill="#e4e4e4">11</text>
<text transform="scale(0.8,1)" x="832.4 844.4" y="1065.4" text-anchor="middle" font-size="20.3" font-weight="normal" fill="#e4e4e4">12</text>
<text transform="scale(0.8,1)" x="938.0 950.0" y="1065.4" text-anchor="middle" font-size="20.3" font-weight="normal" fill="#e4e4e4">13</text>
<text transform="scale(0.8,1)" x="1047.4 1059.4" y="1065.4" text-anchor="middle" font-size="20.3" font-weight="normal" fill="#e4e4e4">14</text>
<text transform="scale(0.8,1)" x="1159.9 1171.9" y="1065.4" text-anchor="middle" font-size="20.3" font-weight="normal" fill="#e4e4e4">15</text>
<text transform="scale(0.8,1)" x="1242.6 1254.6" y="1065.4" text-anchor="middle" font-size="20.3" font-weight="normal" fill="#e4e4e4">17</text>
<text transform="scale(0.8,1)" x="1351.6 1363.6" y="1065.4" text-anchor="middle" font-size="20.3" font-weight="normal" fill="#e4e4e4">18</text>
<text transform="scale(0.8,1)" x="1441.5 1453.5" y="1065.4" text-anchor="middle" font-size="20.3" font-weight="normal" fill="#e4e4e4">19</text>
<text transform="scale(0.8,1)" x="1515.7 1527.7" y="1065.4" text-anchor="middle" font-size="20.3" font-weight="normal" fill="#e4e4e4">20</text>
<text transform="scale(0.8,1)" x="1601.2 1613.2" y="1065.4" text-anchor="middle" font-size="20.3" font-weight="normal" fill="#e4e4e4">21</text>
<text transform="scale(0.8,1)" x="1716.9 1728.9" y="1065.4" text-anchor="middle" font-size="20.3" font-weight="normal" fill="#e4e4e4">22</text>
<text transform="scale(0.8,1)" x="1826.2 1838.2" y="1065.4" text-anchor="middle" font-size="20.3" font-weight="normal" fill="#e4e4e4">23</text>
<text transform="scale(0.8,1)" x="1934.0 1946.0" y="1065.4" text-anchor="middle" font-size="20.3" font-weight="normal" fill="#e4e4e4">00</text>
<text transform="scale(0.8,1)" x="2033.1 2045.1" y="1065.4" text-anchor="middle" font-size="20.3" font-weight="normal" fill="#e4e4e4">01</text>
<text transform="scale(0.8,1)" x="2099.5 2111.5" y="1065.4" text-anchor="middle" font-size="20.3" font-weight="normal" fill="#e4e4e4">02</text>
<text transform="scale(0.8,1)" x="2173.5 2185.5" y="1065.4" text-anchor="middle" font-size="20.3" font-weight="normal" fill="#e4e4e4">03</text>
<text transform="scale(0.8,1)" x="2253.5 2265.5" y="1065.4" text-anchor="middle" font-size="20.3" font-weight="normal" fill="#e4e4e4">04</text>
<text transform="scale(0.8,1)" x="2322.1 2334.1" y="1065.4" text-anchor="middle" font-size="20.3" font-weight="normal" fill="#e4e4e4">05</text>
<text transform="scale(0.8,1)" x="2351.6 2363.6" y="1065.4" text-anchor="middle" font-size="20.3" font-weight="normal" fill="#e4e4e4">06</text>
<text transform="scale(0.8,1)" x="2391.6 2403.6 2415.6 2427.6 2439.6 2451.6" y="770.5" text-anchor="middle" font-size="20.3" font-weight="normal" fill="#dcdcdc">14,900</text>
<text transform="scale(0.8,1)" x="2391.6 2403.6 2415.6 2427.6 2439.6 2451.6" y="839.7" text-anchor="middle" font-size="20.3" font-weight="normal" fill="#dcdcdc">14,800</text>
<text transform="scale(0.8,1)" x="2391.6 2403.6 2415.6 2427.6 2439.6 2451.6" y="909.5" text-anchor="middle" font-size="20.3" font-weight="normal" fill="#dcdcdc">14,700</text>
<text transform="scale(0.8,1)" x="2391.6 2403.6 2415.6 2427.6 2439.6 2451.6" y="980.3" text-anchor="middle" font-size="20.3" font-weight="normal" fill="#dcdcdc">14,600</text>
<text transform="scale(0.8,1)" x="2391.6 2403.6 2415.6 2427.6 2439.6 2451.6" y="1050.0" text-anchor="middle" font-size="20.3" font-weight="normal" fill="#dcdcdc">14,500</text>
<rect x="1907" y="829.4" width="92.5" height="34" fill="#d3d3d3"/>
<text transform="scale(0.8,1)" x="2411.0 2423.0 2435.0 2447.0 2459.0 2471.0" y="850.2" text-anchor="middle" font-size="21" font-weight="bold" fill="#000" stroke="#000" stroke-width="0.7">14,798</text></g>
</svg>
</body>
</html>
